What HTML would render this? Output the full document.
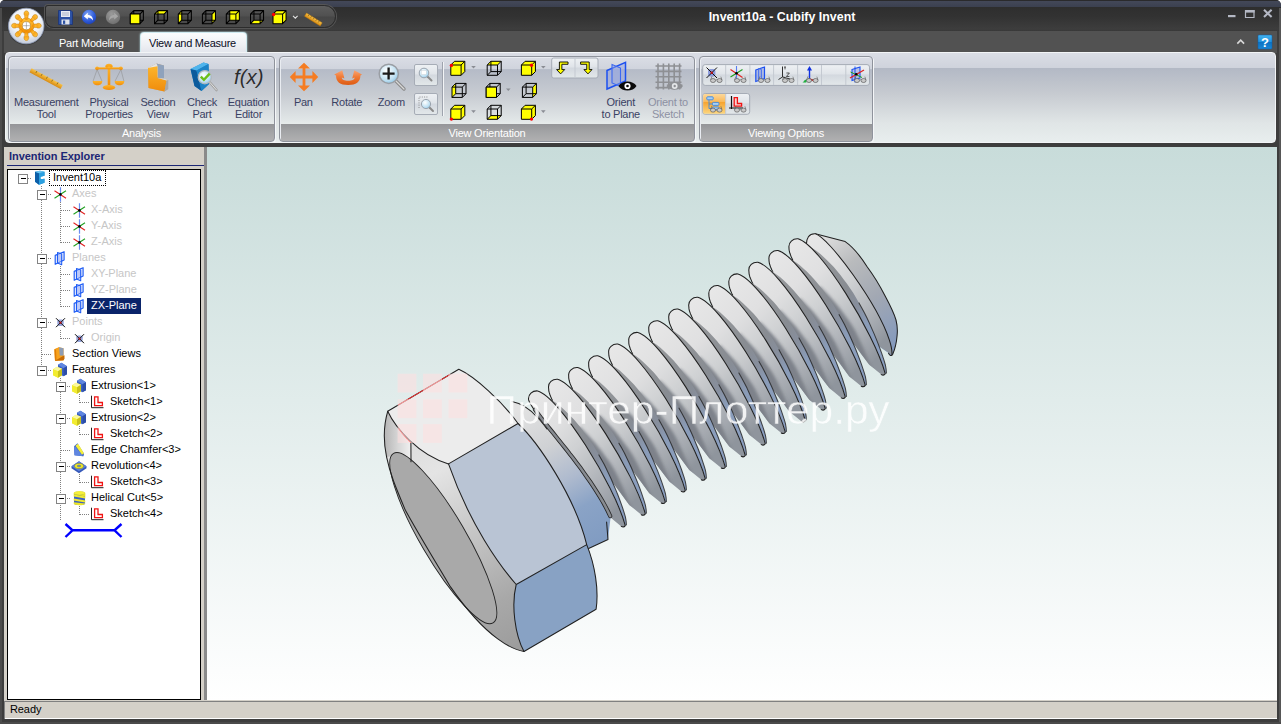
<!DOCTYPE html>
<html><head><meta charset="utf-8">
<style>
*{box-sizing:border-box;margin:0;padding:0}
html,body{width:1281px;height:724px;overflow:hidden;background:#fff;font-family:"Liberation Sans",sans-serif;}
.abs{position:absolute}
#win{position:absolute;left:0;top:0;width:1281px;height:724px;background:#3d3d3d;overflow:hidden;border-radius:5px 5px 0 0}
#topband{left:0;top:0;width:1281px;height:8px;background:linear-gradient(#2a2a2c 0,#2a2a2c 1px,#434859 1px,#3a3f4e 100%)}
#title{left:0;top:7px;width:1281px;height:24px;background:linear-gradient(#2e2e2e,#323232 40%,#3d3d3d 92%,#383838)}
#tabrow{left:4px;top:31px;width:1273px;height:22px;background:#525252}
#titletext{left:682px;top:10px;width:200px;text-align:center;color:#fff;font-weight:bold;font-size:12.4px;line-height:14px;white-space:nowrap}
#qat{left:45px;top:5px;width:291px;height:23px;border-radius:3px 12px 12px 9px;background:linear-gradient(#5e5e5e,#505050 48%,#474747 52%,#4b4b4b);border:1px solid #2c2c2c;box-shadow:0 0 0 1px #555}
.tab{font-size:11px;line-height:14px;white-space:nowrap;letter-spacing:-0.25px}
#ribbon{left:5px;top:52.4px;width:1271px;height:91.1px;border-radius:4px;border:1px solid #f2f4f6;
 background:linear-gradient(#dadde5 0,#cfd3dc 14.6px,#b3b9c5 15.4px,#c6cad0 40px,#e0e5e6 70px,#e8eeee 100%)}
.grp{position:absolute;top:56px;height:86px;border-radius:4px;border:1px solid #8f939c;box-shadow:1px 1px 0 #f4f6f8, inset 1px 1px 0 #e9ecf1;
 background:linear-gradient(#dadde5 0,#d0d4dd 11.8px,#b5bbc7 12.6px,#c8ccd2 38px,#e2e7e8 64px,#e6ebeb 66.5px,#959699 67.5px,#a3a4a6 75px,#b0b0b1 100%)}
.cap{position:absolute;left:0;right:0;bottom:1px;height:14px;text-align:center;color:#fff;font-size:11px;line-height:14px;white-space:nowrap;letter-spacing:-0.22px}
.lbl{position:absolute;text-align:center;color:#3a4163;font-size:11px;line-height:12.8px;white-space:nowrap;letter-spacing:-0.25px}
.lbl.dis{color:#8d91a3}
#left{left:4px;top:147px;width:200px;height:554px;background:#d4d0c8}
#split{left:204px;top:147px;width:3px;height:554px;background:#8a8a8a}
#tree{left:7px;top:169px;width:194px;height:531px;background:#fff;border:1px solid #000}
#view{left:207px;top:147px;width:1070px;height:554px;background:linear-gradient(#c8dcda,#ffffff)}
#status{left:4px;top:700px;width:1273px;height:19px;background:#d4d0c8;border-top:1px solid #d4d0c8;box-shadow:inset 1px 1px 0 #808080, inset 0 -1px 0 #fff}
.t{position:absolute;font-size:12px;line-height:16px;white-space:nowrap;color:#000;letter-spacing:-0.25px}
.t.g{color:#cbcbcb}
.tt{font-size:11px;line-height:14px;white-space:nowrap}
</style></head><body>
<div id="win">
<div id="topband" class="abs"></div>
<div id="title" class="abs"></div>
<div id="tabrow" class="abs"></div>
<div id="qat" class="abs"></div>
<div id="titletext" class="abs">Invent10a - Cubify Invent</div>

<!-- tabs -->
<div class="abs tab" style="left:59px;top:36px;color:#fff">Part Modeling</div>
<div class="abs" style="left:140px;top:32px;width:107px;height:22px;border-radius:4px 4px 0 0;background:linear-gradient(#fbfcfd,#eef0f4 55%,#e0e3ea);border:1px solid #cfeaf0;border-bottom:none;box-shadow:0 0 2px #bfe8f0"></div>
<div class="abs tab" style="left:149px;top:36.4px;color:#0a0c24">View and Measure</div>

<div id="ribbon" class="abs"></div>
<div class="grp" style="left:8px;width:267px"><div class="cap">Analysis</div></div>
<div class="grp" style="left:279px;width:416px"><div class="cap">View Orientation</div></div>
<div class="grp" style="left:699px;width:174px"><div class="cap">Viewing Options</div></div>

<div id="left" class="abs"></div>
<div id="split" class="abs"></div>
<div id="tree" class="abs"></div>
<div id="view" class="abs"></div>
<div id="status" class="abs"></div>
<div class="abs tt" style="left:10px;top:702px;color:#000;letter-spacing:-0.1px">Ready</div>
<div class="abs" style="left:0;top:8px;width:2px;height:716px;background:#4c4c4c"></div><div class="abs" style="left:1279px;top:8px;width:2px;height:716px;background:#565656"></div><div class="abs" style="left:0;top:722px;width:1281px;height:2px;background:#4a4a4a"></div>
<svg class="abs" style="left:0;top:0" width="1281" height="147" viewBox="0 0 1281 147">
<defs>
<radialGradient id="appg" cx=".5" cy=".35" r=".75"><stop offset="0" stop-color="#ffffff"/><stop offset=".55" stop-color="#eef1f6"/><stop offset=".85" stop-color="#c3cbdb"/><stop offset="1" stop-color="#8e9ab4"/></radialGradient>
<linearGradient id="gearg" x1="0" y1="0" x2="0" y2="1"><stop offset="0" stop-color="#ffc23a"/><stop offset="1" stop-color="#f08a00"/></linearGradient>
<radialGradient id="undog" cx=".4" cy=".3" r=".8"><stop offset="0" stop-color="#7fa4f4"/><stop offset=".6" stop-color="#2e5ad8"/><stop offset="1" stop-color="#1a3aa8"/></radialGradient>
<radialGradient id="redog" cx=".4" cy=".3" r=".8"><stop offset="0" stop-color="#9a9a9a"/><stop offset="1" stop-color="#6a6a6a"/></radialGradient>
<linearGradient id="helpg" x1="0" y1="0" x2="0" y2="1"><stop offset="0" stop-color="#45b4f0"/><stop offset=".5" stop-color="#1f8fdc"/><stop offset=".52" stop-color="#0a72c4"/><stop offset="1" stop-color="#1a86d4"/></linearGradient>
<linearGradient id="rulg" x1="0" y1="0" x2="0" y2="1"><stop offset="0" stop-color="#f7c24a"/><stop offset="1" stop-color="#d88a10"/></linearGradient>
<linearGradient id="org" x1="0" y1="0" x2="0" y2="1"><stop offset="0" stop-color="#fdb52a"/><stop offset="1" stop-color="#f08c0c"/></linearGradient>
<linearGradient id="pang" x1="0" y1="0" x2="0" y2="1"><stop offset="0" stop-color="#f98a38"/><stop offset="1" stop-color="#e8600c"/></linearGradient>
<radialGradient id="lens" cx=".4" cy=".35" r=".7"><stop offset="0" stop-color="#ffffff"/><stop offset=".7" stop-color="#bfe0f2"/><stop offset="1" stop-color="#8cc4e6"/></radialGradient>
<linearGradient id="blk" x1="0" y1="0" x2="1" y2="1"><stop offset="0" stop-color="#3aa6e6"/><stop offset="1" stop-color="#0a5fa4"/></linearGradient>
<linearGradient id="btng" x1="0" y1="0" x2="0" y2="1"><stop offset="0" stop-color="#eef1f4"/><stop offset=".45" stop-color="#e0e4e9"/><stop offset=".5" stop-color="#d3d8df"/><stop offset="1" stop-color="#e3e8ea"/></linearGradient>
<linearGradient id="hotg" x1="0" y1="0" x2="0" y2="1"><stop offset="0" stop-color="#fcd89a"/><stop offset=".4" stop-color="#f9b858"/><stop offset=".42" stop-color="#f6a430"/><stop offset="1" stop-color="#fbd680"/></linearGradient>
</defs>
<circle cx="26.2" cy="26.5" r="18.6" fill="#2c2c2c" opacity=".5"/>
<circle cx="26.2" cy="26" r="17.8" fill="url(#appg)" stroke="#8e9ab6" stroke-width=".8"/>
<g transform="translate(26.4,25.7) rotate(0)"><path d="M-1.5,-6.5 L-1.7,-10 C-2.9,-11.2 -2.7,-14.6 0,-14.9 C2.7,-14.6 2.9,-11.2 1.7,-10 L1.5,-6.5 Z" fill="url(#gearg)" stroke="#c07a10" stroke-width=".5"/></g>
<g transform="translate(26.4,25.7) rotate(45)"><path d="M-1.5,-6.5 L-1.7,-10 C-2.9,-11.2 -2.7,-14.6 0,-14.9 C2.7,-14.6 2.9,-11.2 1.7,-10 L1.5,-6.5 Z" fill="url(#gearg)" stroke="#c07a10" stroke-width=".5"/></g>
<g transform="translate(26.4,25.7) rotate(90)"><path d="M-1.5,-6.5 L-1.7,-10 C-2.9,-11.2 -2.7,-14.6 0,-14.9 C2.7,-14.6 2.9,-11.2 1.7,-10 L1.5,-6.5 Z" fill="url(#gearg)" stroke="#c07a10" stroke-width=".5"/></g>
<g transform="translate(26.4,25.7) rotate(135)"><path d="M-1.5,-6.5 L-1.7,-10 C-2.9,-11.2 -2.7,-14.6 0,-14.9 C2.7,-14.6 2.9,-11.2 1.7,-10 L1.5,-6.5 Z" fill="url(#gearg)" stroke="#c07a10" stroke-width=".5"/></g>
<g transform="translate(26.4,25.7) rotate(180)"><path d="M-1.5,-6.5 L-1.7,-10 C-2.9,-11.2 -2.7,-14.6 0,-14.9 C2.7,-14.6 2.9,-11.2 1.7,-10 L1.5,-6.5 Z" fill="url(#gearg)" stroke="#c07a10" stroke-width=".5"/></g>
<g transform="translate(26.4,25.7) rotate(225)"><path d="M-1.5,-6.5 L-1.7,-10 C-2.9,-11.2 -2.7,-14.6 0,-14.9 C2.7,-14.6 2.9,-11.2 1.7,-10 L1.5,-6.5 Z" fill="url(#gearg)" stroke="#c07a10" stroke-width=".5"/></g>
<g transform="translate(26.4,25.7) rotate(270)"><path d="M-1.5,-6.5 L-1.7,-10 C-2.9,-11.2 -2.7,-14.6 0,-14.9 C2.7,-14.6 2.9,-11.2 1.7,-10 L1.5,-6.5 Z" fill="url(#gearg)" stroke="#c07a10" stroke-width=".5"/></g>
<g transform="translate(26.4,25.7) rotate(315)"><path d="M-1.5,-6.5 L-1.7,-10 C-2.9,-11.2 -2.7,-14.6 0,-14.9 C2.7,-14.6 2.9,-11.2 1.7,-10 L1.5,-6.5 Z" fill="url(#gearg)" stroke="#c07a10" stroke-width=".5"/></g>
<circle cx="26.4" cy="25.7" r="7.6" fill="url(#gearg)" stroke="#c07a10" stroke-width=".5"/>
<g transform="translate(26.4,25.7) rotate(0)"><path d="M-1.2,-6 L-1.3,-10 L1.3,-10 L1.2,-6 Z" fill="url(#gearg)"/></g>
<g transform="translate(26.4,25.7) rotate(45)"><path d="M-1.2,-6 L-1.3,-10 L1.3,-10 L1.2,-6 Z" fill="url(#gearg)"/></g>
<g transform="translate(26.4,25.7) rotate(90)"><path d="M-1.2,-6 L-1.3,-10 L1.3,-10 L1.2,-6 Z" fill="url(#gearg)"/></g>
<g transform="translate(26.4,25.7) rotate(135)"><path d="M-1.2,-6 L-1.3,-10 L1.3,-10 L1.2,-6 Z" fill="url(#gearg)"/></g>
<g transform="translate(26.4,25.7) rotate(180)"><path d="M-1.2,-6 L-1.3,-10 L1.3,-10 L1.2,-6 Z" fill="url(#gearg)"/></g>
<g transform="translate(26.4,25.7) rotate(225)"><path d="M-1.2,-6 L-1.3,-10 L1.3,-10 L1.2,-6 Z" fill="url(#gearg)"/></g>
<g transform="translate(26.4,25.7) rotate(270)"><path d="M-1.2,-6 L-1.3,-10 L1.3,-10 L1.2,-6 Z" fill="url(#gearg)"/></g>
<g transform="translate(26.4,25.7) rotate(315)"><path d="M-1.2,-6 L-1.3,-10 L1.3,-10 L1.2,-6 Z" fill="url(#gearg)"/></g>
<circle cx="26.4" cy="25.7" r="4.1" fill="#fff" stroke="#b07818" stroke-width=".6"/>
<path d="M22.9,25.7 h7 M26.4,22.2 v7" stroke="#8a8a8a" stroke-width=".6"/>
<g transform="translate(58,10)"><path d="M0.5,0.5 H13 L14.5,2 V14.5 H0.5 Z" fill="#2d52a4" stroke="#1a3478" stroke-width=".8"/><rect x="3" y="1" width="9" height="6" fill="#e8ecf4"/><path d="M4,3 h7 M4,5 h7" stroke="#9aa4bc" stroke-width=".8"/><rect x="3.5" y="9.5" width="8" height="5" fill="#dfe3ec"/><rect x="5" y="10.5" width="2.2" height="3.4" fill="#2d52a4"/></g>
<circle cx="89" cy="17" r="7.2" fill="url(#undog)"/><path d="M93,20.5 C93,16.5 90.5,15 87.8,15 V12.8 L83.8,16.2 L87.8,19.6 V17.4 C90,17.4 91.8,18.2 93,20.5 Z" fill="#fff"/>
<circle cx="113" cy="17" r="7.2" fill="url(#redog)"/><path d="M109,20.5 C109,16.5 111.5,15 114.2,15 V12.8 L118.2,16.2 L114.2,19.6 V17.4 C112,17.4 110.2,18.2 109,20.5 Z" fill="#a6a6a6"/>
<g transform="translate(130.3,10.6)" stroke-linejoin="round"><path d="M0,3.456 H9.6 V13.056 H0 Z M3.456,0 H13.056 V9.6 H3.456 Z M0,3.456 L3.456,0 M9.6,3.456 L13.056,0 M9.6,13.056 L13.056,9.6 M0,13.056 L3.456,9.6" fill="none" stroke="#000" stroke-width="1.05"/><path d="M0,3.456 H9.6 V13.056 H0 Z" fill="#ffff00" stroke="#000" stroke-width="1.05"/></g>
<g transform="translate(154.5,10.6)" stroke-linejoin="round"><path d="M0,3.456 L3.456,0 L13.056,0 L9.6,3.456 Z" fill="#ffff00" stroke="none"/><path d="M0,3.456 H9.6 V13.056 H0 Z M3.456,0 H13.056 V9.6 H3.456 Z M0,3.456 L3.456,0 M9.6,3.456 L13.056,0 M9.6,13.056 L13.056,9.6 M0,13.056 L3.456,9.6" fill="none" stroke="#000" stroke-width="1.05"/></g>
<g transform="translate(178.3,10.6)" stroke-linejoin="round"><path d="M0,3.456 L3.456,0 L3.456,9.6 L0,13.056 Z" fill="#ffff00" stroke="none"/><path d="M0,3.456 H9.6 V13.056 H0 Z M3.456,0 H13.056 V9.6 H3.456 Z M0,3.456 L3.456,0 M9.6,3.456 L13.056,0 M9.6,13.056 L13.056,9.6 M0,13.056 L3.456,9.6" fill="none" stroke="#000" stroke-width="1.05"/></g>
<g transform="translate(202.4,10.6)" stroke-linejoin="round"><path d="M9.6,3.456 L13.056,0 L13.056,9.6 L9.6,13.056 Z" fill="#ffff00" stroke="none"/><path d="M0,3.456 H9.6 V13.056 H0 Z M3.456,0 H13.056 V9.6 H3.456 Z M0,3.456 L3.456,0 M9.6,3.456 L13.056,0 M9.6,13.056 L13.056,9.6 M0,13.056 L3.456,9.6" fill="none" stroke="#000" stroke-width="1.05"/></g>
<g transform="translate(226.3,10.6)" stroke-linejoin="round"><path d="M3.456,0 L13.056,0 L13.056,9.6 L3.456,9.6 Z" fill="#ffff00" stroke="none"/><path d="M0,3.456 H9.6 V13.056 H0 Z M3.456,0 H13.056 V9.6 H3.456 Z M0,3.456 L3.456,0 M9.6,3.456 L13.056,0 M9.6,13.056 L13.056,9.6 M0,13.056 L3.456,9.6" fill="none" stroke="#000" stroke-width="1.05"/></g>
<g transform="translate(250.5,10.6)" stroke-linejoin="round"><path d="M0,13.056 L3.456,9.6 L13.056,9.6 L9.6,13.056 Z" fill="#ffff00" stroke="none"/><path d="M0,3.456 H9.6 V13.056 H0 Z M3.456,0 H13.056 V9.6 H3.456 Z M0,3.456 L3.456,0 M9.6,3.456 L13.056,0 M9.6,13.056 L13.056,9.6 M0,13.056 L3.456,9.6" fill="none" stroke="#000" stroke-width="1.05"/></g>
<g transform="translate(273,10.6)" stroke-linejoin="round"><path d="M0,3.456 L3.456,0 L13.056,0 L13.056,9.6 L9.6,13.056 L0,13.056 Z" fill="#ffff00" stroke="none"/><path d="M0,3.456 H9.6 V13.056 H0 Z M0,3.456 L3.456,0 H13.056 L9.6,3.456 M13.056,0 V9.6 L9.6,13.056" fill="none" stroke="#000" stroke-width="1.05"/><circle cx="0.6" cy="3.856" r="1.7" fill="#ff0000" stroke="none"/></g>
<path d="M293,15.8 L295.3,18.2 L297.6,15.8" stroke="#e0e0e0" stroke-width="1.1" fill="none"/>
<g transform="translate(306.5,13) rotate(32)"><rect x="0" y="0" width="18.5" height="3.8" fill="url(#rulg)" stroke="#b8760a" stroke-width=".4"/><path d="M3,0 v1.8 M6,0 v1.8 M9,0 v1.8 M12,0 v1.8 M15,0 v1.8" stroke="#7a5a10" stroke-width=".6"/></g>
<rect x="1228" y="15" width="7.5" height="2.2" fill="#b4b8c4"/>
<path d="M1245.5,10.5 h8.5 v7 h-8.5 Z" fill="none" stroke="#b4b8c4" stroke-width="1.2"/><rect x="1245" y="10" width="9.6" height="2.6" fill="#b4b8c4"/>
<path d="M1264,9.8 L1271.6,17 M1271.6,9.8 L1264,17" stroke="#b4b8c4" stroke-width="2.1"/>
<path d="M1237.3,43.6 L1240.7,40.2 L1244.1,43.6" stroke="#d8d8d8" stroke-width="1.6" fill="none"/>
<rect x="1258" y="35" width="14" height="14" rx="1" fill="url(#helpg)" stroke="#0c5ea8" stroke-width=".5"/>
<text x="1265" y="46.6" text-anchor="middle" font-family="Liberation Sans, sans-serif" font-weight="bold" font-size="13" fill="#fff">?</text>
<g transform="translate(31.6,68.2) rotate(28.4)"><rect x="0" y="0" width="35.4" height="4.6" fill="url(#rulg)"/><path d="M6,0 v2.2 M12,0 v2.2 M18,0 v2.2 M24,0 v2.2 M30,0 v2.2" stroke="#8a6a18" stroke-width=".8"/></g>
<g transform="translate(92.5,63.5)" fill="url(#org)" stroke="none"><ellipse cx="16.5" cy="2.8" rx="3.6" ry="2.6"/><rect x="15.2" y="3" width="2.6" height="20"/><rect x="4" y="3.8" width="25" height="2"/><circle cx="4.6" cy="4.8" r="1.9"/><circle cx="28.4" cy="4.8" r="1.9"/><ellipse cx="16.5" cy="24" rx="6.2" ry="2.4"/><path d="M0.2,17.5 H9.8 C9.8,20.5 7.5,21.8 5,21.8 C2.5,21.8 0.2,20.5 0.2,17.5 Z"/><path d="M22.2,17.5 H31.8 C31.8,20.5 29.5,21.8 27,21.8 C24.5,21.8 22.2,20.5 22.2,17.5 Z"/><path d="M4.6,6 L0.6,17.5 M4.6,6 L9.4,17.5 M28.4,6 L22.6,17.5 M28.4,6 L31.4,17.5" stroke="#8a8a8a" stroke-width=".5" fill="none"/></g>
<g transform="translate(147.5,63)"><path d="M0.5,5 L9,0.5 L16.5,2.5 L16.5,15.5 L20.5,17 L20.5,26 L17,28.5 L1,25 Z" fill="#c8a878"/><path d="M9,0.5 L16.5,2.5 L16.5,15.5 L10,14.5 Z" fill="#8fa2bc"/><path d="M0.5,5 L9,0.5 L10,3 L10,14.5 Z" fill="#e4e4e4"/><path d="M0.5,5 L10,3.2 L10,15 L19,17.5 L17,28.5 L1,25 Z" fill="url(#org)"/><path d="M19,17.5 L20.8,17 L20.8,26 L17,28.5 Z" fill="#a8a8a8"/><path d="M10,15 L16.5,15.5 L20.5,17 L19,17.5 Z" fill="#d8d8d8"/></g>
<g transform="translate(189.5,62)"><path d="M1,7 L14,0.5 L19,2 L19.5,22 L12,29 L5,24 Z" fill="url(#blk)"/><path d="M1,7 L14,0.5 L19,2 L7,8.5 Z" fill="#4fb4ec"/><path d="M1,7 L7,8.5 L12,29 L5,24 Z" fill="#0c5a9c"/><path d="M7,8.5 L19,2 L19.5,22 L12,29 Z" fill="#1c84c8"/><path d="M20.5,20.5 L27,28" stroke="#a0a0a0" stroke-width="2.6" stroke-linecap="round"/><path d="M20.5,20.5 L27,28" stroke="#e0e0e0" stroke-width="1" stroke-linecap="round"/><circle cx="15.3" cy="15.2" r="6.6" fill="url(#lens)" stroke="#b4b8bc" stroke-width="1.3"/><path d="M11.3,14.6 L14.4,17.8 L20.2,11.6" stroke="#6cc018" stroke-width="2.4" fill="none"/></g>
<text x="234" y="84" font-family="Liberation Sans, sans-serif" font-style="italic" font-size="20.5" fill="#1c1c1c" fill-opacity=".92" textLength="29.5" lengthAdjust="spacingAndGlyphs">f(x)</text>
<g transform="translate(304,77)" fill="#f57c22"><path d="M0,-14.2 L6,-8.4 H1.4 V-1.4 H8.4 V-6 L14.2,0 L8.4,6 V1.4 H1.4 V8.4 H6 L0,14.2 L-6,8.4 H-1.4 V1.4 H-8.4 V6 L-14.2,0 L-8.4,-6 V-1.4 H-1.4 V-8.4 H-6 Z"/></g>
<linearGradient id="rotg" x1="0" y1="0" x2="0" y2="1"><stop offset="0" stop-color="#f9a473"/><stop offset=".45" stop-color="#f07a35"/><stop offset="1" stop-color="#dd5a12"/></linearGradient>
<path d="M342.3,70.3 L334.2,74.5 L336,75.5 C336,82 340,85 348.2,85 C356,85 360.4,82 360.4,75.5 L362,74.5 L354.3,70.3 L352.2,78.4 L354.6,77.6 C354.6,80 352,80.8 348.2,80.8 C344.4,80.8 341.8,80 341.8,77.6 L344.4,78.4 Z" fill="url(#rotg)"/>
<g transform="translate(378,63)"><path d="M17.5,17.5 L26,26" stroke="#8a8a8a" stroke-width="3.4" stroke-linecap="round"/><path d="M17.5,17.5 L26,26" stroke="#d8d8d8" stroke-width="1.2" stroke-linecap="round"/><circle cx="10.8" cy="10.8" r="9.6" fill="url(#lens)" stroke="#9a9ea4" stroke-width="1.5"/><path d="M4.6,10.6 H16.6 M10.6,4.6 V16.6" stroke="#1a1a1a" stroke-width="2.3"/></g>
<rect x="414.5" y="64.5" width="23" height="21" rx="1.5" fill="url(#btng)" stroke="#a6acb6" stroke-width="1"/>
<rect x="414.5" y="93.5" width="23" height="21" rx="1.5" fill="url(#btng)" stroke="#a6acb6" stroke-width="1"/>
<g transform="translate(418,67)"><path d="M9.5,9.5 L13.5,13.5" stroke="#8a8a8a" stroke-width="2" stroke-linecap="round"/><circle cx="6" cy="6" r="4.8" fill="url(#lens)" stroke="#9ca4ae" stroke-width="1"/><rect x="3.2" y="3.5" width="5" height="4" fill="#fff" stroke="#c0c8d0" stroke-width=".4"/></g>
<g transform="translate(418,96)"><path d="M1,12 V1 H10" stroke="#7a7a7a" stroke-width=".8" stroke-dasharray="1,1.3" fill="none"/><path d="M11.5,11.5 L15,15" stroke="#8a8a8a" stroke-width="2" stroke-linecap="round"/><circle cx="8" cy="8" r="4.6" fill="url(#lens)" stroke="#9ca4ae" stroke-width="1"/></g>
<path d="M442.5,62 V116" stroke="#9ea3ad" stroke-width="1"/><path d="M443.5,62 V116" stroke="#f2f4f6" stroke-width="1"/>
<g transform="translate(450.8,61.3)" stroke-linejoin="round"><path d="M0,3.708 L3.708,0 L14.008,0 L14.008,10.3 L10.3,14.008 L0,14.008 Z" fill="#ffff00" stroke="none"/><path d="M0,3.708 H10.3 V14.008 H0 Z M0,3.708 L3.708,0 H14.008 L10.3,3.708 M14.008,0 V10.3 L10.3,14.008" fill="none" stroke="#000" stroke-width="1"/><circle cx="0.6" cy="4.108" r="1.7" fill="#ff0000" stroke="none"/></g>
<path d="M471.2,66 h4.6 l-2.3,2.6 Z" fill="#8a8d94"/>
<g transform="translate(487.2,61.3)" stroke-linejoin="round"><path d="M0,3.708 L3.708,0 L14.008,0 L10.3,3.708 Z" fill="#ffff00" stroke="none"/><path d="M0,3.708 H10.3 V14.008 H0 Z M3.708,0 H14.008 V10.3 H3.708 Z M0,3.708 L3.708,0 M10.3,3.708 L14.008,0 M10.3,14.008 L14.008,10.3 M0,14.008 L3.708,10.3" fill="none" stroke="#000" stroke-width="1"/></g>
<g transform="translate(521.4,61.3)" stroke-linejoin="round"><path d="M0,3.708 L3.708,0 L14.008,0 L14.008,10.3 L10.3,14.008 L0,14.008 Z" fill="#ffff00" stroke="none"/><path d="M0,3.708 H10.3 V14.008 H0 Z M0,3.708 L3.708,0 H14.008 L10.3,3.708 M14.008,0 V10.3 L10.3,14.008" fill="none" stroke="#000" stroke-width="1"/><circle cx="10.1" cy="3.908" r="1.7" fill="#ff0000" stroke="none"/></g>
<path d="M541,66 h4.6 l-2.3,2.6 Z" fill="#8a8d94"/>
<g transform="translate(452,83.4)" stroke-linejoin="round"><path d="M0,3.708 L3.708,0 L3.708,10.3 L0,14.008 Z" fill="#ffff00" stroke="none"/><path d="M0,3.708 H10.3 V14.008 H0 Z M3.708,0 H14.008 V10.3 H3.708 Z M0,3.708 L3.708,0 M10.3,3.708 L14.008,0 M10.3,14.008 L14.008,10.3 M0,14.008 L3.708,10.3" fill="none" stroke="#000" stroke-width="1"/></g>
<g transform="translate(486.2,83.4)" stroke-linejoin="round"><path d="M0,3.708 H10.3 V14.008 H0 Z M3.708,0 H14.008 V10.3 H3.708 Z M0,3.708 L3.708,0 M10.3,3.708 L14.008,0 M10.3,14.008 L14.008,10.3 M0,14.008 L3.708,10.3" fill="none" stroke="#000" stroke-width="1"/><path d="M0,3.708 H10.3 V14.008 H0 Z" fill="#ffff00" stroke="#000" stroke-width="1"/></g>
<path d="M506,88.4 h4.6 l-2.3,2.6 Z" fill="#8a8d94"/>
<g transform="translate(522.4,83.4)" stroke-linejoin="round"><path d="M10.3,3.708 L14.008,0 L14.008,10.3 L10.3,14.008 Z" fill="#ffff00" stroke="none"/><path d="M0,3.708 H10.3 V14.008 H0 Z M3.708,0 H14.008 V10.3 H3.708 Z M0,3.708 L3.708,0 M10.3,3.708 L14.008,0 M10.3,14.008 L14.008,10.3 M0,14.008 L3.708,10.3" fill="none" stroke="#000" stroke-width="1"/></g>
<g transform="translate(450.8,105.3)" stroke-linejoin="round"><path d="M0,3.708 L3.708,0 L14.008,0 L14.008,10.3 L10.3,14.008 L0,14.008 Z" fill="#ffff00" stroke="none"/><path d="M0,3.708 H10.3 V14.008 H0 Z M0,3.708 L3.708,0 H14.008 L10.3,3.708 M14.008,0 V10.3 L10.3,14.008" fill="none" stroke="#000" stroke-width="1"/><circle cx="0.6" cy="13.808" r="1.7" fill="#ff0000" stroke="none"/></g>
<path d="M471.2,110.3 h4.6 l-2.3,2.6 Z" fill="#8a8d94"/>
<g transform="translate(487.2,105.3)" stroke-linejoin="round"><path d="M0,14.008 L3.708,10.3 L14.008,10.3 L10.3,14.008 Z" fill="#ffff00" stroke="none"/><path d="M0,3.708 H10.3 V14.008 H0 Z M3.708,0 H14.008 V10.3 H3.708 Z M0,3.708 L3.708,0 M10.3,3.708 L14.008,0 M10.3,14.008 L14.008,10.3 M0,14.008 L3.708,10.3" fill="none" stroke="#000" stroke-width="1"/></g>
<g transform="translate(521.4,105.3)" stroke-linejoin="round"><path d="M0,3.708 L3.708,0 L14.008,0 L14.008,10.3 L10.3,14.008 L0,14.008 Z" fill="#ffff00" stroke="none"/><path d="M0,3.708 H10.3 V14.008 H0 Z M0,3.708 L3.708,0 H14.008 L10.3,3.708 M14.008,0 V10.3 L10.3,14.008" fill="none" stroke="#000" stroke-width="1"/><circle cx="10.1" cy="13.808" r="1.7" fill="#ff0000" stroke="none"/></g>
<path d="M541,110.3 h4.6 l-2.3,2.6 Z" fill="#8a8d94"/>
<rect x="551.7" y="58" width="46.3" height="20" rx="2" fill="url(#btng)" stroke="#a6acb6" stroke-width="1"/><path d="M575,58.5 V77.5" stroke="#c4c9d1"/>
<path d="M568,62.5 H561 V68.5 H564.2 L559.6,73.4 L555,68.5 H558.2 V59.9 H568 Z" transform="translate(562.3,67.9) scale(.88) translate(-561.5,-66.6)" fill="#ffff00" stroke="#000" stroke-width="1"/>
<path d="M580,62.5 H587 V68.5 H583.8 L588.4,73.4 L593,68.5 H589.8 V59.9 H580 Z" transform="translate(586.3,67.9) scale(.88) translate(-586.5,-66.6)" fill="#ffff00" stroke="#000" stroke-width="1"/>
<g transform="translate(606,61.5)"><path d="M1,9 L19.5,0.8 L19.5,19.5 L1,27.5 Z" fill="#9aa8e0" fill-opacity=".55" stroke="#1c50f0" stroke-width="1.5"/><path d="M6,3 L14.5,6.5 L14.5,25 L6,21.5 Z" fill="#9aa8e0" fill-opacity=".45" stroke="#3c68f0" stroke-width="1.1"/><path d="M12.5,24.5 C16,18.5 27,18.5 30.5,24.5 C27,30.5 16,30.5 12.5,24.5 Z" fill="#0a0a0a"/><circle cx="21.5" cy="24.5" r="3.1" fill="#fff"/><circle cx="21.5" cy="24.5" r="1.3" fill="#0a0a0a"/></g>
<g transform="translate(655.5,63.5)" stroke="#8e9094" stroke-width="1.6" fill="none"><path d="M2.5,0 V26 M0,2.5 H26"/><path d="M7.9,0 V26 M0,7.9 H26"/><path d="M13.3,0 V26 M0,13.3 H26"/><path d="M18.7,0 V26 M0,18.7 H26"/><path d="M24.1,0 V26 M0,24.1 H26"/><path d="M11,22.5 C14,17.5 24,17.5 27.5,22.5 C24,27.5 14,27.5 11,22.5 Z" fill="#8e9094" stroke="none"/><circle cx="19.2" cy="22.5" r="2.9" fill="#e4e6e8" stroke="none"/><circle cx="19.2" cy="22.5" r="1.2" fill="#8e9094" stroke="none"/></g>
<rect x="702.7" y="64.6" width="166.8" height="20.8" rx="2.5" fill="url(#btng)" stroke="#a6acb6" stroke-width="1"/>
<path d="M725.7,65 V85" stroke="#c4c9d1" stroke-width="1"/>
<path d="M749.9,65 V85" stroke="#c4c9d1" stroke-width="1"/>
<path d="M773.6,65 V85" stroke="#c4c9d1" stroke-width="1"/>
<path d="M797.6,65 V85" stroke="#c4c9d1" stroke-width="1"/>
<path d="M821.5,65 V85" stroke="#c4c9d1" stroke-width="1"/>
<path d="M845.8,65 V85" stroke="#c4c9d1" stroke-width="1"/>
<rect x="702.7" y="93.5" width="47" height="20.8" rx="2.5" fill="url(#btng)" stroke="#a6acb6" stroke-width="1"/>
<path d="M704.7,94 H725.5 V113.8 H704.7 Q703.2,113.8 703.2,112.3 V95.5 Q703.2,94 704.7,94 Z" fill="url(#hotg)"/><path d="M725.7,94 V114" stroke="#c4c9d1" stroke-width="1"/>
<g transform="translate(706,67)"><rect x="2" y="2" width="7.4" height="7.4" rx="2" fill="#8c9cdc"/><path d="M0.5,0.5 L11,11 M11,0.5 L0.5,11" stroke="#101010" stroke-width="1"/><circle cx="5.7" cy="5.7" r="1.2" fill="#c01010"/></g><g transform="translate(710.3,78) scale(.84)"><ellipse cx="3.2" cy="3" rx="3" ry="2.4" fill="#c8c8c8" stroke="#5a5a5a" stroke-width=".8"/><ellipse cx="11" cy="3" rx="3" ry="2.4" fill="#c8c8c8" stroke="#5a5a5a" stroke-width=".8"/><path d="M6.2,2.4 Q7.1,1.4 8,2.4 M0.4,2 L2,-2 M13.8,2 L12.6,-1.6" stroke="#5a5a5a" stroke-width=".7" fill="none"/></g>
<g transform="translate(730,66)"><path d="M6.5,0 V14" stroke="#5a7cf0" stroke-width="1.1"/><path d="M0.5,3.5 L12.5,11.5" stroke="#e02020" stroke-width="1.1"/><path d="M0.5,11 L12.5,3.5" stroke="#20a020" stroke-width="1.1"/><circle cx="6.5" cy="7.3" r="1.3" fill="#000"/></g><g transform="translate(734.3,78) scale(.84)"><ellipse cx="3.2" cy="3" rx="3" ry="2.4" fill="#c8c8c8" stroke="#5a5a5a" stroke-width=".8"/><ellipse cx="11" cy="3" rx="3" ry="2.4" fill="#c8c8c8" stroke="#5a5a5a" stroke-width=".8"/><path d="M6.2,2.4 Q7.1,1.4 8,2.4 M0.4,2 L2,-2 M13.8,2 L12.6,-1.6" stroke="#5a5a5a" stroke-width=".7" fill="none"/></g>
<g transform="translate(755,66)"><path d="M0.8,4 L9.5,1 L9.5,12.5 L0.8,15.5 Z" fill="#8c9cdc" fill-opacity=".6" stroke="#1c50f0" stroke-width="1.2"/><path d="M3.5,2.5 L6.5,3.6 L6.5,14 L3.5,13 Z" fill="#8c9cdc" fill-opacity=".5" stroke="#3c68f0" stroke-width=".8"/></g><g transform="translate(758.3,78) scale(.84)"><ellipse cx="3.2" cy="3" rx="3" ry="2.4" fill="#c8c8c8" stroke="#5a5a5a" stroke-width=".8"/><ellipse cx="11" cy="3" rx="3" ry="2.4" fill="#c8c8c8" stroke="#5a5a5a" stroke-width=".8"/><path d="M6.2,2.4 Q7.1,1.4 8,2.4 M0.4,2 L2,-2 M13.8,2 L12.6,-1.6" stroke="#5a5a5a" stroke-width=".7" fill="none"/></g>
<g transform="translate(778,66)" stroke="#303030" stroke-width="1" fill="none"><path d="M4.5,0.5 V11 M0.5,13.5 L4.5,11 L12,13"/><path d="M6,1 L8,1 M7,1 V3.4 M8.4,7 H11.4 L8.4,10.5 H11.4" stroke-width=".8"/></g><g transform="translate(782.3,78) scale(.84)"><ellipse cx="3.2" cy="3" rx="3" ry="2.4" fill="#c8c8c8" stroke="#5a5a5a" stroke-width=".8"/><ellipse cx="11" cy="3" rx="3" ry="2.4" fill="#c8c8c8" stroke="#5a5a5a" stroke-width=".8"/><path d="M6.2,2.4 Q7.1,1.4 8,2.4 M0.4,2 L2,-2 M13.8,2 L12.6,-1.6" stroke="#5a5a5a" stroke-width=".7" fill="none"/></g>
<g transform="translate(802,66)"><path d="M7.5,13 V3" stroke="#1030e0" stroke-width="1.4"/><path d="M7.5,0 L10,4.4 H5 Z" fill="#1030e0"/><path d="M7.5,13 L13,15" stroke="#e02020" stroke-width="1.6"/><path d="M7.5,13 L2.5,15.5" stroke="#20b040" stroke-width="1.6"/><path d="M0.5,16.5 L3.8,13.4 L4.4,16.5 Z" fill="#20b040"/></g><g transform="translate(806.3,78) scale(.84)"><ellipse cx="3.2" cy="3" rx="3" ry="2.4" fill="#c8c8c8" stroke="#5a5a5a" stroke-width=".8"/><ellipse cx="11" cy="3" rx="3" ry="2.4" fill="#c8c8c8" stroke="#5a5a5a" stroke-width=".8"/><path d="M6.2,2.4 Q7.1,1.4 8,2.4 M0.4,2 L2,-2 M13.8,2 L12.6,-1.6" stroke="#5a5a5a" stroke-width=".7" fill="none"/></g>
<g transform="translate(850,65.5)"><path d="M2,4 L10,1.5 L10,12.5 L2,15 Z" fill="#8c9cdc" fill-opacity=".5" stroke="#1c50f0" stroke-width="1.1"/><path d="M5,1 V17" stroke="#1c50f0" stroke-width="1"/><path d="M0,12.5 L14,4.5" stroke="#e02020" stroke-width="1.2"/><path d="M0.5,6.5 L12,12" stroke="#20a020" stroke-width="1"/><circle cx="6.2" cy="8.8" r="1.3" fill="#000"/></g><g transform="translate(854.3,78) scale(.84)"><ellipse cx="3.2" cy="3" rx="3" ry="2.4" fill="#c8c8c8" stroke="#5a5a5a" stroke-width=".8"/><ellipse cx="11" cy="3" rx="3" ry="2.4" fill="#c8c8c8" stroke="#5a5a5a" stroke-width=".8"/><path d="M6.2,2.4 Q7.1,1.4 8,2.4 M0.4,2 L2,-2 M13.8,2 L12.6,-1.6" stroke="#5a5a5a" stroke-width=".7" fill="none"/></g>
<g transform="translate(706,96)" fill="#a8d0f4" stroke="#3c88e0" stroke-width=".9"><path d="M3,4 V12.5 H6.5 M3,8 H6.5" fill="none"/><rect x="0.8" y="0.8" width="6.4" height="3" rx=".8"/><rect x="6.5" y="6.4" width="6.4" height="3" rx=".8"/><rect x="6.5" y="11" width="6.4" height="3" rx=".8"/></g><g transform="translate(710.3,107.6) scale(.84)"><ellipse cx="3.2" cy="3" rx="3" ry="2.4" fill="#c8c8c8" stroke="#5a5a5a" stroke-width=".8"/><ellipse cx="11" cy="3" rx="3" ry="2.4" fill="#c8c8c8" stroke="#5a5a5a" stroke-width=".8"/><path d="M6.2,2.4 Q7.1,1.4 8,2.4 M0.4,2 L2,-2 M13.8,2 L12.6,-1.6" stroke="#5a5a5a" stroke-width=".7" fill="none"/></g>
<g transform="translate(729,95.5)"><path d="M2.5,0.5 V13.5 M0,12.5 H14" stroke="#101010" stroke-width="1.2" fill="none"/><path d="M5.2,2.2 H8.4 V8 H12.6 V10.6 H5.2 Z" fill="#f8d0d0" stroke="#f01414" stroke-width="1.3"/></g><g transform="translate(734.3,107.6) scale(.84)"><ellipse cx="3.2" cy="3" rx="3" ry="2.4" fill="#c8c8c8" stroke="#5a5a5a" stroke-width=".8"/><ellipse cx="11" cy="3" rx="3" ry="2.4" fill="#c8c8c8" stroke="#5a5a5a" stroke-width=".8"/><path d="M6.2,2.4 Q7.1,1.4 8,2.4 M0.4,2 L2,-2 M13.8,2 L12.6,-1.6" stroke="#5a5a5a" stroke-width=".7" fill="none"/></g>
</svg>
<div class="lbl" style="left:1.3px;top:95.5px;width:90px">Measurement<br>Tool</div>
<div class="lbl" style="left:64px;top:95.5px;width:90px">Physical<br>Properties</div>
<div class="lbl" style="left:113px;top:95.5px;width:90px">Section<br>View</div>
<div class="lbl" style="left:157px;top:95.5px;width:90px">Check<br>Part</div>
<div class="lbl" style="left:203.5px;top:95.5px;width:90px">Equation<br>Editor</div>
<div class="lbl" style="left:258.3px;top:95.5px;width:90px">Pan</div>
<div class="lbl" style="left:301.8px;top:95.5px;width:90px">Rotate</div>
<div class="lbl" style="left:346.3px;top:95.5px;width:90px">Zoom</div>
<div class="lbl" style="left:575.8px;top:95.5px;width:90px">Orient<br>to Plane</div>
<div class="lbl dis" style="left:623px;top:95.5px;width:90px">Orient to<br>Sketch</div>
<svg class="abs" style="left:0;top:0" width="210" height="724" viewBox="0 0 210 724" shape-rendering="auto">
<path d="M41.5,186 V371" stroke="#808080" stroke-width="1" stroke-dasharray="1,1" fill="none" shape-rendering="crispEdges"/>
<path d="M60.5,202 V243" stroke="#808080" stroke-width="1" stroke-dasharray="1,1" fill="none" shape-rendering="crispEdges"/>
<path d="M60.5,266 V307" stroke="#808080" stroke-width="1" stroke-dasharray="1,1" fill="none" shape-rendering="crispEdges"/>
<path d="M60.5,330 V339" stroke="#808080" stroke-width="1" stroke-dasharray="1,1" fill="none" shape-rendering="crispEdges"/>
<path d="M60.5,378 V499" stroke="#808080" stroke-width="1" stroke-dasharray="1,1" fill="none" shape-rendering="crispEdges"/>
<path d="M79.5,394 V403" stroke="#808080" stroke-width="1" stroke-dasharray="1,1" fill="none" shape-rendering="crispEdges"/>
<path d="M79.5,426 V435" stroke="#808080" stroke-width="1" stroke-dasharray="1,1" fill="none" shape-rendering="crispEdges"/>
<path d="M79.5,474 V483" stroke="#808080" stroke-width="1" stroke-dasharray="1,1" fill="none" shape-rendering="crispEdges"/>
<path d="M79.5,506 V515" stroke="#808080" stroke-width="1" stroke-dasharray="1,1" fill="none" shape-rendering="crispEdges"/>
<path d="M60.5,497 V521" stroke="#808080" stroke-width="1" stroke-dasharray="1,1" fill="none" shape-rendering="crispEdges"/>
<path d="M28,178.5 H32" stroke="#808080" stroke-width="1" stroke-dasharray="1,1" fill="none" shape-rendering="crispEdges"/>
<path d="M42,194.5 H52" stroke="#808080" stroke-width="1" stroke-dasharray="1,1" fill="none" shape-rendering="crispEdges"/>
<path d="M61,210.5 H70" stroke="#808080" stroke-width="1" stroke-dasharray="1,1" fill="none" shape-rendering="crispEdges"/>
<path d="M61,226.5 H70" stroke="#808080" stroke-width="1" stroke-dasharray="1,1" fill="none" shape-rendering="crispEdges"/>
<path d="M61,242.5 H70" stroke="#808080" stroke-width="1" stroke-dasharray="1,1" fill="none" shape-rendering="crispEdges"/>
<path d="M42,258.5 H52" stroke="#808080" stroke-width="1" stroke-dasharray="1,1" fill="none" shape-rendering="crispEdges"/>
<path d="M61,274.5 H70" stroke="#808080" stroke-width="1" stroke-dasharray="1,1" fill="none" shape-rendering="crispEdges"/>
<path d="M61,290.5 H70" stroke="#808080" stroke-width="1" stroke-dasharray="1,1" fill="none" shape-rendering="crispEdges"/>
<path d="M61,306.5 H70" stroke="#808080" stroke-width="1" stroke-dasharray="1,1" fill="none" shape-rendering="crispEdges"/>
<path d="M42,322.5 H52" stroke="#808080" stroke-width="1" stroke-dasharray="1,1" fill="none" shape-rendering="crispEdges"/>
<path d="M61,338.5 H70" stroke="#808080" stroke-width="1" stroke-dasharray="1,1" fill="none" shape-rendering="crispEdges"/>
<path d="M42,354.5 H51" stroke="#808080" stroke-width="1" stroke-dasharray="1,1" fill="none" shape-rendering="crispEdges"/>
<path d="M42,370.5 H52" stroke="#808080" stroke-width="1" stroke-dasharray="1,1" fill="none" shape-rendering="crispEdges"/>
<path d="M61,386.5 H71" stroke="#808080" stroke-width="1" stroke-dasharray="1,1" fill="none" shape-rendering="crispEdges"/>
<path d="M80,402.5 H89" stroke="#808080" stroke-width="1" stroke-dasharray="1,1" fill="none" shape-rendering="crispEdges"/>
<path d="M61,418.5 H71" stroke="#808080" stroke-width="1" stroke-dasharray="1,1" fill="none" shape-rendering="crispEdges"/>
<path d="M80,434.5 H89" stroke="#808080" stroke-width="1" stroke-dasharray="1,1" fill="none" shape-rendering="crispEdges"/>
<path d="M61,450.5 H70" stroke="#808080" stroke-width="1" stroke-dasharray="1,1" fill="none" shape-rendering="crispEdges"/>
<path d="M61,466.5 H71" stroke="#808080" stroke-width="1" stroke-dasharray="1,1" fill="none" shape-rendering="crispEdges"/>
<path d="M80,482.5 H89" stroke="#808080" stroke-width="1" stroke-dasharray="1,1" fill="none" shape-rendering="crispEdges"/>
<path d="M61,498.5 H71" stroke="#808080" stroke-width="1" stroke-dasharray="1,1" fill="none" shape-rendering="crispEdges"/>
<path d="M80,514.5 H89" stroke="#808080" stroke-width="1" stroke-dasharray="1,1" fill="none" shape-rendering="crispEdges"/>
<rect x="18" y="174" width="9" height="9" fill="#fff" stroke="#848484" stroke-width="1" transform="translate(.5,.5)" shape-rendering="crispEdges"/>
<path d="M20.5,178.5 h5" stroke="#000" stroke-width="1" shape-rendering="crispEdges"/>
<g transform="translate(32,170.2)"><path d="M3,1.5 L8,0.5 L12.5,1.5 L12.5,5.5 L8.5,6.5 L8.5,9 L12.5,8.5 L12.5,12.5 L7,14.5 L3,11.5 Z" fill="#1e8fd0"/><path d="M3,1.5 L7,3 L7,14.5 L3,11.5 Z" fill="#0d5fa8"/><path d="M7,3 L12.5,1.5 L12.5,5.5 L8.5,6.5 L8.5,9 L12.5,8.5 L12.5,12.5 L7,14.5 Z" fill="#2ba0e0"/><path d="M3,1.5 L8,0.5 L12.5,1.5 L7,3 Z" fill="#6cc4f0"/></g>
<rect x="37" y="190" width="9" height="9" fill="#fff" stroke="#848484" stroke-width="1" transform="translate(.5,.5)" shape-rendering="crispEdges"/>
<path d="M39.5,194.5 h5" stroke="#000" stroke-width="1" shape-rendering="crispEdges"/>
<g transform="translate(52,186.2)"><path d="M8.5,1 V15.5" stroke="#6a8cf0" stroke-width="1.2"/><path d="M2.5,4.5 L14,12" stroke="#e02020" stroke-width="1.1"/><path d="M2.5,12 L14,4.5" stroke="#20a020" stroke-width="1.1"/><circle cx="8.4" cy="8.2" r="1.3" fill="#000"/></g>
<g transform="translate(71,202.2)"><path d="M8.5,1 V15.5" stroke="#6a8cf0" stroke-width="1.2"/><path d="M2.5,4.5 L14,12" stroke="#e02020" stroke-width="1.1"/><path d="M2.5,12 L14,4.5" stroke="#20a020" stroke-width="1.1"/><circle cx="8.4" cy="8.2" r="1.3" fill="#000"/></g>
<g transform="translate(71,218.2)"><path d="M8.5,1 V15.5" stroke="#6a8cf0" stroke-width="1.2"/><path d="M2.5,4.5 L14,12" stroke="#e02020" stroke-width="1.1"/><path d="M2.5,12 L14,4.5" stroke="#20a020" stroke-width="1.1"/><circle cx="8.4" cy="8.2" r="1.3" fill="#000"/></g>
<g transform="translate(71,234.2)"><path d="M8.5,1 V15.5" stroke="#6a8cf0" stroke-width="1.2"/><path d="M2.5,4.5 L14,12" stroke="#e02020" stroke-width="1.1"/><path d="M2.5,12 L14,4.5" stroke="#20a020" stroke-width="1.1"/><circle cx="8.4" cy="8.2" r="1.3" fill="#000"/></g>
<rect x="37" y="254" width="9" height="9" fill="#fff" stroke="#848484" stroke-width="1" transform="translate(.5,.5)" shape-rendering="crispEdges"/>
<path d="M39.5,258.5 h5" stroke="#000" stroke-width="1" shape-rendering="crispEdges"/>
<g transform="translate(52,250.2)"><g transform="translate(1.2,0)"><ellipse cx="6.5" cy="8" rx="2.6" ry="3.6" fill="#c4cef6"/><path d="M2,5.2 L10.9,1.5 L10.9,9.9 L2,14.1 Z" fill="#b8c6f8" fill-opacity=".35" stroke="#1e5cf5" stroke-width="1.15" stroke-linejoin="round"/><path d="M4.3,2.4 L8.5,3.8 L8.5,14.6 L4.3,12.7 Z" fill="#b8c6f8" fill-opacity=".35" stroke="#1e5cf5" stroke-width="1.05" stroke-linejoin="round"/></g></g>
<g transform="translate(71,266.2)"><g transform="translate(1.2,0)"><ellipse cx="6.5" cy="8" rx="2.6" ry="3.6" fill="#c4cef6"/><path d="M2,5.2 L10.9,1.5 L10.9,9.9 L2,14.1 Z" fill="#b8c6f8" fill-opacity=".35" stroke="#1e5cf5" stroke-width="1.15" stroke-linejoin="round"/><path d="M4.3,2.4 L8.5,3.8 L8.5,14.6 L4.3,12.7 Z" fill="#b8c6f8" fill-opacity=".35" stroke="#1e5cf5" stroke-width="1.05" stroke-linejoin="round"/></g></g>
<g transform="translate(71,282.2)"><g transform="translate(1.2,0)"><ellipse cx="6.5" cy="8" rx="2.6" ry="3.6" fill="#c4cef6"/><path d="M2,5.2 L10.9,1.5 L10.9,9.9 L2,14.1 Z" fill="#b8c6f8" fill-opacity=".35" stroke="#1e5cf5" stroke-width="1.15" stroke-linejoin="round"/><path d="M4.3,2.4 L8.5,3.8 L8.5,14.6 L4.3,12.7 Z" fill="#b8c6f8" fill-opacity=".35" stroke="#1e5cf5" stroke-width="1.05" stroke-linejoin="round"/></g></g>
<g transform="translate(71,298.2)"><g transform="translate(1.2,0)"><ellipse cx="6.5" cy="8" rx="2.6" ry="3.6" fill="#c4cef6"/><path d="M2,5.2 L10.9,1.5 L10.9,9.9 L2,14.1 Z" fill="#b8c6f8" fill-opacity=".35" stroke="#1e5cf5" stroke-width="1.15" stroke-linejoin="round"/><path d="M4.3,2.4 L8.5,3.8 L8.5,14.6 L4.3,12.7 Z" fill="#b8c6f8" fill-opacity=".35" stroke="#1e5cf5" stroke-width="1.05" stroke-linejoin="round"/></g></g>
<rect x="37" y="318" width="9" height="9" fill="#fff" stroke="#848484" stroke-width="1" transform="translate(.5,.5)" shape-rendering="crispEdges"/>
<path d="M39.5,322.5 h5" stroke="#000" stroke-width="1" shape-rendering="crispEdges"/>
<g transform="translate(52,314.2)"><rect x="5.3" y="5.3" width="6.4" height="6.4" rx="1.8" fill="#98a6dc"/><path d="M4,4 L13,13 M13,4 L4,13" stroke="#101010" stroke-width="1"/><circle cx="8.5" cy="8.5" r="1.1" fill="#b01010"/></g>
<g transform="translate(71,330.2)"><rect x="5.3" y="5.3" width="6.4" height="6.4" rx="1.8" fill="#98a6dc"/><path d="M4,4 L13,13 M13,4 L4,13" stroke="#101010" stroke-width="1"/><circle cx="8.5" cy="8.5" r="1.1" fill="#b01010"/></g>
<g transform="translate(52,346.2)"><path d="M2.5,3 L7,1 L11.5,2 L11.5,14 L3,14.5 Z" fill="#f59a14"/><path d="M7,1 L11.5,2 L11.5,9.5 L7.5,9.5 Z" fill="#8d9cb4"/><path d="M2.5,3 L7,1 L7.5,9.5 L11.5,9.5 L11.5,14 L3,14.5 Z" fill="#f7a21e"/><path d="M2.5,3 L4,3.2 L4.5,14.4 L3,14.5 Z" fill="#e07e08"/><path d="M3,14.5 L11.5,14 L12.5,12.5 L12.5,9 L11.5,9.5" fill="#c86c05"/></g>
<rect x="37" y="366" width="9" height="9" fill="#fff" stroke="#848484" stroke-width="1" transform="translate(.5,.5)" shape-rendering="crispEdges"/>
<path d="M39.5,370.5 h5" stroke="#000" stroke-width="1" shape-rendering="crispEdges"/>
<g transform="translate(52,362.2)"><path d="M6,2.5 L9.5,0.5 L15,4 L15,12 L11,14 L6,10 Z" fill="#3c62c4"/><path d="M6,2.5 L9.5,0.5 L15,4 L11.5,6 Z" fill="#5f86e0"/><path d="M11.5,6 L15,4 L15,12 L11.5,14 Z" fill="#2c4ea8"/><path d="M1,7 L5,4.5 L10,6.5 L10,13 L6,15.5 L1,13 Z" fill="#f5ef3a"/><path d="M1,7 L5,4.5 L10,6.5 L6,9 Z" fill="#fbf8a0"/><path d="M6,9 L10,6.5 L10,13 L6,15.5 Z" fill="#c9c21c"/><path d="M1,7 L6,9 L6,15.5 L1,13 Z" fill="#f2ec30"/></g>
<rect x="56" y="382" width="9" height="9" fill="#fff" stroke="#848484" stroke-width="1" transform="translate(.5,.5)" shape-rendering="crispEdges"/>
<path d="M58.5,386.5 h5" stroke="#000" stroke-width="1" shape-rendering="crispEdges"/>
<g transform="translate(71,378.2)"><path d="M6,2.5 L9.5,0.5 L15,4 L15,12 L11,14 L6,10 Z" fill="#3c62c4"/><path d="M6,2.5 L9.5,0.5 L15,4 L11.5,6 Z" fill="#5f86e0"/><path d="M11.5,6 L15,4 L15,12 L11.5,14 Z" fill="#2c4ea8"/><path d="M1,7 L5,4.5 L10,6.5 L10,13 L6,15.5 L1,13 Z" fill="#f5ef3a"/><path d="M1,7 L5,4.5 L10,6.5 L6,9 Z" fill="#fbf8a0"/><path d="M6,9 L10,6.5 L10,13 L6,15.5 Z" fill="#c9c21c"/><path d="M1,7 L6,9 L6,15.5 L1,13 Z" fill="#f2ec30"/></g>
<g transform="translate(90,394.2)"><path d="M1.5,1.5 V13.5 H13.5" stroke="#202020" stroke-width="1" fill="none"/><path d="M4.6,2.6 H8 V8.3 H12.4 V11.4 H4.6 Z" fill="#fff" stroke="#f01414" stroke-width="1.3"/></g>
<rect x="56" y="414" width="9" height="9" fill="#fff" stroke="#848484" stroke-width="1" transform="translate(.5,.5)" shape-rendering="crispEdges"/>
<path d="M58.5,418.5 h5" stroke="#000" stroke-width="1" shape-rendering="crispEdges"/>
<g transform="translate(71,410.2)"><path d="M6,2.5 L9.5,0.5 L15,4 L15,12 L11,14 L6,10 Z" fill="#3c62c4"/><path d="M6,2.5 L9.5,0.5 L15,4 L11.5,6 Z" fill="#5f86e0"/><path d="M11.5,6 L15,4 L15,12 L11.5,14 Z" fill="#2c4ea8"/><path d="M1,7 L5,4.5 L10,6.5 L10,13 L6,15.5 L1,13 Z" fill="#f5ef3a"/><path d="M1,7 L5,4.5 L10,6.5 L6,9 Z" fill="#fbf8a0"/><path d="M6,9 L10,6.5 L10,13 L6,15.5 Z" fill="#c9c21c"/><path d="M1,7 L6,9 L6,15.5 L1,13 Z" fill="#f2ec30"/></g>
<g transform="translate(90,426.2)"><path d="M1.5,1.5 V13.5 H13.5" stroke="#202020" stroke-width="1" fill="none"/><path d="M4.6,2.6 H8 V8.3 H12.4 V11.4 H4.6 Z" fill="#fff" stroke="#f01414" stroke-width="1.3"/></g>
<g transform="translate(71,442.2)"><path d="M3,4 L6.5,1 L13,11.5 L12.5,14 L3.5,13 Z" fill="#3c62c4"/><path d="M3,4 L4,4 L12,14 L3.5,13 Z" fill="#5f86e0"/><path d="M4.5,3.5 L7,1.5 L13,11 L11,12.5 Z" fill="#f5ef3a"/></g>
<rect x="56" y="462" width="9" height="9" fill="#fff" stroke="#848484" stroke-width="1" transform="translate(.5,.5)" shape-rendering="crispEdges"/>
<path d="M58.5,466.5 h5" stroke="#000" stroke-width="1" shape-rendering="crispEdges"/>
<g transform="translate(71,458.2)"><path d="M0.5,8 L8,3 L15.5,8 L15.5,10 L8,15 L0.5,10 Z" fill="#3558b8"/><path d="M0.5,8 L8,3 L15.5,8 L8,13 Z" fill="#5b80dc"/><ellipse cx="8" cy="7.8" rx="4.4" ry="2.6" fill="#f0ea30" stroke="#8f8a10" stroke-width=".5"/><ellipse cx="8" cy="7.8" rx="2" ry="1.1" fill="#5b80dc" stroke="#8f8a10" stroke-width=".4"/></g>
<g transform="translate(90,474.2)"><path d="M1.5,1.5 V13.5 H13.5" stroke="#202020" stroke-width="1" fill="none"/><path d="M4.6,2.6 H8 V8.3 H12.4 V11.4 H4.6 Z" fill="#fff" stroke="#f01414" stroke-width="1.3"/></g>
<rect x="56" y="494" width="9" height="9" fill="#fff" stroke="#848484" stroke-width="1" transform="translate(.5,.5)" shape-rendering="crispEdges"/>
<path d="M58.5,498.5 h5" stroke="#000" stroke-width="1" shape-rendering="crispEdges"/>
<g transform="translate(71,490.2)"><rect x="3" y="1.5" width="11" height="13" rx="2" fill="#3c62c4"/><ellipse cx="8.5" cy="2.8" rx="5.8" ry="1.9" fill="#f5ef3a"/><path d="M2.7,4.2 L14.3,6.2 L14.3,8.4 L2.7,6.4 Z" fill="#f0ea30"/><path d="M2.7,8.2 L14.3,10.2 L14.3,12.4 L2.7,10.4 Z" fill="#f0ea30"/><path d="M2.7,12 L14.3,13.2 C14.3,15.5 2.7,15.5 2.7,13.4 Z" fill="#ece628"/><path d="M2.7,2.8 L2.7,4.2 L14.3,6.2 L14.3,2.8 C13,5 4,5 2.7,2.8" fill="#e8e224"/></g>
<g transform="translate(90,506.2)"><path d="M1.5,1.5 V13.5 H13.5" stroke="#202020" stroke-width="1" fill="none"/><path d="M4.6,2.6 H8 V8.3 H12.4 V11.4 H4.6 Z" fill="#fff" stroke="#f01414" stroke-width="1.3"/></g>
<path d="M65.5,524 L72.5,530.3 L65.5,537 M72,530.3 H114.5 M121.5,524 L114.5,530.3 L121.5,537" stroke="#0000ff" stroke-width="2.4" fill="none" stroke-linejoin="miter"/>
</svg>
<div class="abs" style="left:9px;top:149px;font-size:11px;font-weight:bold;color:#1c2674;line-height:14px;white-space:nowrap;letter-spacing:-0.05px">Invention Explorer</div>
<div class="abs" style="left:7px;top:165px;width:197px;height:1px;background:#1c2674"></div>
<div class="abs" style="left:49px;top:170px;width:57px;height:16px;border:1px dotted #000"></div>
<div class="abs tt" style="left:53px;top:170px;color:#000">Invent10a</div>
<div class="abs tt" style="left:72px;top:186px;color:#c6c6c6">Axes</div>
<div class="abs tt" style="left:91px;top:202px;color:#c6c6c6">X-Axis</div>
<div class="abs tt" style="left:91px;top:218px;color:#c6c6c6">Y-Axis</div>
<div class="abs tt" style="left:91px;top:234px;color:#c6c6c6">Z-Axis</div>
<div class="abs tt" style="left:72px;top:250px;color:#c6c6c6">Planes</div>
<div class="abs tt" style="left:91px;top:266px;color:#c6c6c6">XY-Plane</div>
<div class="abs tt" style="left:91px;top:282px;color:#c6c6c6">YZ-Plane</div>
<div class="abs" style="left:87px;top:298px;width:54px;height:16px;background:#0a246a"></div>
<div class="abs tt" style="left:91px;top:298px;color:#fff">ZX-Plane</div>
<div class="abs tt" style="left:72px;top:314px;color:#c6c6c6">Points</div>
<div class="abs tt" style="left:91px;top:330px;color:#c6c6c6">Origin</div>
<div class="abs tt" style="left:72px;top:346px;color:#000">Section Views</div>
<div class="abs tt" style="left:72px;top:362px;color:#000">Features</div>
<div class="abs tt" style="left:91px;top:378px;color:#000">Extrusion&lt;1&gt;</div>
<div class="abs tt" style="left:110px;top:394px;color:#000">Sketch&lt;1&gt;</div>
<div class="abs tt" style="left:91px;top:410px;color:#000">Extrusion&lt;2&gt;</div>
<div class="abs tt" style="left:110px;top:426px;color:#000">Sketch&lt;2&gt;</div>
<div class="abs tt" style="left:91px;top:442px;color:#000">Edge Chamfer&lt;3&gt;</div>
<div class="abs tt" style="left:91px;top:458px;color:#000">Revolution&lt;4&gt;</div>
<div class="abs tt" style="left:110px;top:474px;color:#000">Sketch&lt;3&gt;</div>
<div class="abs tt" style="left:91px;top:490px;color:#000">Helical Cut&lt;5&gt;</div>
<div class="abs tt" style="left:110px;top:506px;color:#000">Sketch&lt;4&gt;</div>
<svg class="abs" style="left:0;top:0" width="1281" height="724" viewBox="0 0 1281 724">
<defs>
<linearGradient id="lg" x1="0" y1="0" x2="0.75" y2="1">
<stop offset="0" stop-color="#e8e8e8"/><stop offset=".3" stop-color="#e0e0e1"/><stop offset=".5" stop-color="#cfd1d3"/><stop offset=".66" stop-color="#bcbfc3"/><stop offset=".8" stop-color="#abafb5"/><stop offset=".92" stop-color="#9ca1a8"/><stop offset="1" stop-color="#8f959d"/></linearGradient>
<linearGradient id="wg" x1="0" y1="0" x2="0.7" y2="1">
<stop offset="0" stop-color="#9a9c9e"/><stop offset=".45" stop-color="#888c92"/><stop offset=".62" stop-color="#878f9e"/><stop offset=".75" stop-color="#8a9cb8"/><stop offset="1" stop-color="#8b9fc0"/></linearGradient>
<linearGradient id="endg" gradientUnits="userSpaceOnUse" x1="822" y1="238" x2="898" y2="345">
<stop offset="0" stop-color="#dedede"/><stop offset=".28" stop-color="#b9bbbd"/><stop offset=".6" stop-color="#a2a8b3"/><stop offset="1" stop-color="#8399bd"/></linearGradient>
<linearGradient id="shk" gradientUnits="userSpaceOnUse" x1="527" y1="405" x2="602" y2="540">
<stop offset="0" stop-color="#e2e2e2"/><stop offset=".3" stop-color="#cfd1d4"/><stop offset=".55" stop-color="#aebace"/><stop offset=".75" stop-color="#8aa3c6"/><stop offset="1" stop-color="#819cc2"/></linearGradient>
<linearGradient id="chm" gradientUnits="userSpaceOnUse" x1="395" y1="420" x2="520" y2="650">
<stop offset="0" stop-color="#d8d8d8"/><stop offset=".25" stop-color="#e4e4e4"/><stop offset=".5" stop-color="#c8c8c8"/><stop offset=".8" stop-color="#a8a8a8"/><stop offset="1" stop-color="#9c9c9c"/></linearGradient>
<linearGradient id="chm2" gradientUnits="userSpaceOnUse" x1="384" y1="440" x2="412" y2="440">
<stop offset="0" stop-color="#b4b4b4"/><stop offset=".5" stop-color="#d6d6d6"/><stop offset="1" stop-color="#f2f2f2"/></linearGradient>
<filter id="bl2" x="-20%" y="-20%" width="140%" height="140%"><feGaussianBlur stdDeviation="1.5"/></filter>
<mask id="wm" maskUnits="userSpaceOnUse" x="480" y="380" width="420" height="70"><text x="486.6" y="423.7" font-family="Liberation Sans, sans-serif" font-size="40.5" fill="#fff" stroke="#000" stroke-width="0.55" textLength="403" lengthAdjust="spacingAndGlyphs">Принтер-Плоттер.ру</text></mask>
</defs>
<path d="M815.3,233.8 L845.2,241.6 C853,247 861,257 867.3,267 C874,276 880,286 885,295.7 C890,305 894,313 896,320 C897.5,326 897.6,331 897.1,335.5 C896.5,343 895,349 892.7,354.3 C891.5,356.5 889.5,355.5 888.5,353 L870,340 L800,262 L806,240 Z" fill="url(#endg)"/>
<path d="M815.3,233.8 L845.2,241.6 C853,247 861,257 867.3,267 C874,276 880,286 885,295.7 C890,305 894,313 896,320 C897.5,326 897.6,331 897.1,335.5 C896.5,343 895,349 892.7,354.3 C891.5,356.5 889.5,355.5 888.5,353" stroke="#202020" stroke-width="1.05" fill="none" stroke-linejoin="round" stroke-linecap="round"/>
<path d="M815.3,233.8 C829.3,237.8 877.3,303.8 889.3,339.8 C891.3,345.8 892.3,350.8 891.9,354.8 L875.3,343.8 L806.3,242.8 C805.5,237.3 810.3,233.4 815.3,233.8 Z" fill="url(#lg)"/>
<path d="M806.7,249.8 C804.8,236.8 810.3,233.4 815.3,233.8  C829.3,237.8 877.3,303.8 889.3,339.8 C891.3,345.8 892.3,350.8 891.9,354.8" stroke="#202020" stroke-width="1.05" fill="none" stroke-linejoin="round" stroke-linecap="round"/>
<path d="M809.8,246.6 812.4,249.1 815.1,251.9 817.9,255 820.7,258.3 823.6,261.9 826.6,265.6 829.5,269.6 832.6,273.7 835.6,278 838.6,282.4 841.7,287 844.7,291.7 847.7,296.4 850.7,301.3 853.6,306.1 856.5,311.1 859.3,316 862,320.9 864.7,325.9 867.2,330.8 869.7,335.6 872,340.3 874.2,345 876.3,349.6 878.2,354 880,358.3 881.6,362.5 883,366.4 884.3,370.2 885.3,373.8 L886.4,373.1 886.1,369.1 885.4,365 884.2,360.9 882.8,356.7 881.3,352.2 879.6,347.6 877.8,342.9 875.9,338.1 873.8,333.1 871.6,328.1 869.4,323.1 867,318 864.5,312.9 861.8,307.9 859,302.9 856.2,298 853.3,293.1 850.2,288.4 847,283.8 843.7,279.4 840.4,275.1 837.1,271 833.8,267.1 830.3,263.4 826.8,259.9 823.4,256.7 820.1,253.7 816.6,251 813.2,248.7 809.8,246.6 Z" fill="url(#wg)"/>
<path d="M859,302.9 861.8,307.9 864.5,312.9 867,318 869.4,323.1 871.6,328.1 873.8,333.1 875.9,338.1 877.8,342.9 879.6,347.6 881.3,352.2 882.8,356.7 884.2,360.9 885.4,365 886.1,369.1 886.4,373.1" stroke="#202020" stroke-width="1.05" fill="none" stroke-linejoin="round" stroke-linecap="round" opacity=".8"/>
<path d="M798,238.8 C820,244.8 874.3,333.3 885.3,373.8 Q883.8,376 881.3,374.6 L869.3,364.8 C824.3,302.8 788.5,263.8 789,247.8 C788.2,242.3 793,238.4 798,238.8 Z" fill="url(#lg)"/>
<path d="M792.8,260.2 791.9,258.3 791.1,256.6 790.5,254.9 789.9,253.3 789.5,251.8 789.2,250.4 789,249 789,247.8 C788.2,242.3 793,238.4 798,238.8 C820,244.8 874.3,333.3 885.3,373.8 Q883.8,376 881.3,374.6" stroke="#202020" stroke-width="1.05" fill="none" stroke-linejoin="round" stroke-linecap="round"/>
<clipPath id="cl12"><path d="M798,238.8 C820,244.8 874.3,333.3 885.3,373.8 Q883.8,376 881.3,374.6 L869.3,364.8 C824.3,302.8 788.5,263.8 789,247.8 C788.2,242.3 793,238.4 798,238.8 Z"/></clipPath>
<g clip-path="url(#cl12)"><path d="M815.6,289.7 818.6,294.1 821.7,298.7 824.7,303.4 827.7,308.1 830.7,313 833.6,317.8 836.5,322.8 839.3,327.7 842,332.6 844.7,337.5 847.2,342.4 849.7,347.3 852,352 854.2,356.7 856.3,361.3 858.2,365.7 860,370 861.6,374.2 863,378.1 864.3,381.9 865.3,385.4 L871.6,381.7 872,377.3 871.9,372.8 871.5,368.3 869.9,364.1 868.3,359.7 866.4,355.2 864.5,350.6 862.4,345.8 860.2,341 857.8,336.1 855.4,331.1 852.6,326.3 849.5,321.6 846.2,317 842.8,312.3 839.4,307.8 835.8,303.2 832.1,298.9 828.2,294.8 824.3,290.7 820.4,286.8 Z" fill="#7c8088" opacity=".95" filter="url(#bl2)"/></g>
<path d="M789.8,258.3 792.4,260.8 795.1,263.6 797.8,266.7 800.7,270 803.6,273.6 806.5,277.3 809.5,281.3 812.5,285.4 815.6,289.7 818.6,294.1 821.7,298.7 824.7,303.4 827.7,308.1 830.7,313 833.6,317.8 836.5,322.8 839.3,327.7 842,332.6 844.7,337.5 847.2,342.4 849.7,347.3 852,352 854.2,356.7 856.3,361.3 858.2,365.7 860,370 861.6,374.2 863,378.1 864.3,381.9 865.3,385.4 L866.4,384.8 866.1,380.8 865.4,376.7 864.2,372.6 862.8,368.3 861.3,363.9 859.6,359.3 857.8,354.6 855.9,349.7 853.8,344.8 851.6,339.8 849.4,334.8 847,329.7 844.5,324.6 841.8,319.6 839,314.6 836.2,309.7 833.3,304.8 830.2,300.1 826.9,295.5 823.7,291.1 820.4,286.8 817.1,282.7 813.7,278.8 810.2,275.1 806.8,271.6 803.4,268.4 800.1,265.4 796.6,262.7 793.1,260.4 789.8,258.3 Z" fill="url(#wg)"/>
<path d="M839,314.6 841.8,319.6 844.5,324.6 847,329.7 849.4,334.8 851.6,339.8 853.8,344.8 855.9,349.7 857.8,354.6 859.6,359.3 861.3,363.9 862.8,368.3 864.2,372.6 865.4,376.7 866.1,380.8 866.4,384.8" stroke="#202020" stroke-width="1.05" fill="none" stroke-linejoin="round" stroke-linecap="round" opacity=".8"/>
<path d="M778,250.5 C800,256.5 854.3,344.9 865.3,385.4 Q863.8,387.6 861.3,386.2 L849.3,376.4 C804.3,314.4 768.5,275.5 769,259.5 C768.2,254 773,250.1 778,250.5 Z" fill="url(#lg)"/>
<path d="M772.8,271.9 771.9,270 771.1,268.2 770.4,266.6 769.9,265 769.4,263.5 769.2,262.1 769,260.7 769,259.5 C768.2,254 773,250.1 778,250.5 C800,256.5 854.3,344.9 865.3,385.4 Q863.8,387.6 861.3,386.2" stroke="#202020" stroke-width="1.05" fill="none" stroke-linejoin="round" stroke-linecap="round"/>
<clipPath id="cl11"><path d="M778,250.5 C800,256.5 854.3,344.9 865.3,385.4 Q863.8,387.6 861.3,386.2 L849.3,376.4 C804.3,314.4 768.5,275.5 769,259.5 C768.2,254 773,250.1 778,250.5 Z"/></clipPath>
<g clip-path="url(#cl11)"><path d="M795.6,301.4 798.6,305.8 801.6,310.4 804.7,315.1 807.7,319.8 810.7,324.6 813.6,329.5 816.5,334.4 819.3,339.4 822,344.3 824.7,349.2 827.2,354.1 829.7,359 832,363.7 834.2,368.4 836.3,373 838.2,377.4 840,381.7 841.6,385.8 843,389.8 844.3,393.6 845.3,397.1 L851.6,393.4 852,389 851.9,384.5 851.5,379.9 849.9,375.8 848.3,371.4 846.4,366.9 844.5,362.3 842.4,357.5 840.2,352.7 837.8,347.8 835.4,342.8 832.6,338 829.5,333.3 826.2,328.6 822.8,324 819.3,319.5 815.8,314.9 812.1,310.6 808.2,306.5 804.3,302.4 800.4,298.5 Z" fill="#7c8088" opacity=".95" filter="url(#bl2)"/></g>
<path d="M769.8,270 772.4,272.5 775,275.3 777.8,278.4 780.7,281.7 783.6,285.3 786.5,289 789.5,293 792.5,297.1 795.6,301.4 798.6,305.8 801.6,310.4 804.7,315.1 807.7,319.8 810.7,324.6 813.6,329.5 816.5,334.4 819.3,339.4 822,344.3 824.7,349.2 827.2,354.1 829.7,359 832,363.7 834.2,368.4 836.3,373 838.2,377.4 840,381.7 841.6,385.8 843,389.8 844.3,393.6 845.3,397.1 L846.4,396.5 846.1,392.5 845.4,388.4 844.2,384.3 842.8,380 841.3,375.6 839.6,371 837.8,366.2 835.9,361.4 833.8,356.5 831.6,351.5 829.4,346.4 827,341.3 824.5,336.3 821.8,331.3 819,326.3 816.2,321.3 813.3,316.5 810.2,311.8 806.9,307.2 803.6,302.8 800.4,298.5 797.1,294.4 793.7,290.4 790.2,286.8 786.8,283.3 783.4,280.1 780,277.1 776.5,274.4 773.1,272.1 769.8,270 Z" fill="url(#wg)"/>
<path d="M819,326.3 821.8,331.3 824.5,336.3 827,341.3 829.4,346.4 831.6,351.5 833.8,356.5 835.9,361.4 837.8,366.2 839.6,371 841.3,375.6 842.8,380 844.2,384.3 845.4,388.4 846.1,392.5 846.4,396.5" stroke="#202020" stroke-width="1.05" fill="none" stroke-linejoin="round" stroke-linecap="round" opacity=".8"/>
<path d="M757.9,262.2 C779.9,268.2 834.3,356.6 845.3,397.1 Q843.8,399.3 841.3,397.9 L829.3,388.1 C784.3,326.1 748.4,287.2 748.9,271.2 C748.1,265.7 752.9,261.8 757.9,262.2 Z" fill="url(#lg)"/>
<path d="M752.8,283.6 751.9,281.7 751.1,279.9 750.4,278.3 749.8,276.7 749.4,275.2 749.1,273.8 749,272.4 748.9,271.2 C748.1,265.7 752.9,261.8 757.9,262.2 C779.9,268.2 834.3,356.6 845.3,397.1 Q843.8,399.3 841.3,397.9" stroke="#202020" stroke-width="1.05" fill="none" stroke-linejoin="round" stroke-linecap="round"/>
<clipPath id="cl10"><path d="M757.9,262.2 C779.9,268.2 834.3,356.6 845.3,397.1 Q843.8,399.3 841.3,397.9 L829.3,388.1 C784.3,326.1 748.4,287.2 748.9,271.2 C748.1,265.7 752.9,261.8 757.9,262.2 Z"/></clipPath>
<g clip-path="url(#cl10)"><path d="M775.5,313.1 778.6,317.5 781.6,322.1 784.7,326.7 787.7,331.5 790.6,336.3 793.6,341.2 796.5,346.1 799.3,351.1 802,356 804.7,360.9 807.2,365.8 809.7,370.6 812,375.4 814.2,380.1 816.3,384.6 818.2,389.1 820,393.4 821.6,397.5 823,401.5 824.3,405.2 825.3,408.8 L831.6,405.1 832,400.6 831.9,396.2 831.5,391.6 829.9,387.4 828.3,383.1 826.4,378.6 824.5,373.9 822.4,369.2 820.2,364.4 817.8,359.5 815.4,354.5 812.6,349.7 809.5,345 806.2,340.3 802.8,335.7 799.3,331.1 795.8,326.6 792.1,322.3 788.2,318.2 784.3,314.1 780.3,310.2 Z" fill="#7c8088" opacity=".95" filter="url(#bl2)"/></g>
<path d="M749.7,281.7 752.3,284.2 755,287 757.8,290.1 760.6,293.4 763.5,296.9 766.5,300.7 769.5,304.7 772.5,308.8 775.5,313.1 778.6,317.5 781.6,322.1 784.7,326.7 787.7,331.5 790.6,336.3 793.6,341.2 796.5,346.1 799.3,351.1 802,356 804.7,360.9 807.2,365.8 809.7,370.6 812,375.4 814.2,380.1 816.3,384.6 818.2,389.1 820,393.4 821.6,397.5 823,401.5 824.3,405.2 825.3,408.8 L826.4,408.1 826.1,404.1 825.4,400.1 824.2,396 822.8,391.7 821.3,387.3 819.6,382.7 817.8,377.9 815.9,373.1 813.8,368.2 811.6,363.2 809.3,358.1 807,353 804.5,348 801.7,343 799,338 796.2,333 793.3,328.1 790.2,323.4 786.9,318.9 783.6,314.5 780.3,310.2 777.1,306.1 773.7,302.1 770.2,298.5 766.8,295 763.4,291.8 760,288.8 756.5,286.1 753.1,283.8 749.7,281.7 Z" fill="url(#wg)"/>
<path d="M799,338 801.7,343 804.5,348 807,353 809.3,358.1 811.6,363.2 813.8,368.2 815.9,373.1 817.8,377.9 819.6,382.7 821.3,387.3 822.8,391.7 824.2,396 825.4,400.1 826.1,404.1 826.4,408.1" stroke="#202020" stroke-width="1.05" fill="none" stroke-linejoin="round" stroke-linecap="round" opacity=".8"/>
<path d="M737.9,273.9 C759.9,279.9 814.3,368.3 825.3,408.8 Q823.8,411 821.3,409.6 L809.3,399.8 C764.3,337.8 728.4,298.9 728.9,282.9 C728.1,277.4 732.9,273.5 737.9,273.9 Z" fill="url(#lg)"/>
<path d="M732.7,295.2 731.8,293.4 731,291.6 730.4,290 729.8,288.4 729.4,286.9 729.1,285.5 728.9,284.1 728.9,282.9 C728.1,277.4 732.9,273.5 737.9,273.9 C759.9,279.9 814.3,368.3 825.3,408.8 Q823.8,411 821.3,409.6" stroke="#202020" stroke-width="1.05" fill="none" stroke-linejoin="round" stroke-linecap="round"/>
<clipPath id="cl9"><path d="M737.9,273.9 C759.9,279.9 814.3,368.3 825.3,408.8 Q823.8,411 821.3,409.6 L809.3,399.8 C764.3,337.8 728.4,298.9 728.9,282.9 C728.1,277.4 732.9,273.5 737.9,273.9 Z"/></clipPath>
<g clip-path="url(#cl9)"><path d="M755.5,324.8 758.6,329.2 761.6,333.8 764.6,338.4 767.7,343.2 770.6,348 773.6,352.9 776.4,357.8 779.3,362.7 782,367.7 784.7,372.6 787.2,377.5 789.7,382.3 792,387.1 794.2,391.7 796.3,396.3 798.2,400.8 800,405.1 801.6,409.2 803,413.2 804.3,416.9 805.3,420.5 L811.6,416.7 812,412.3 811.9,407.8 811.5,403.3 809.9,399.1 808.2,394.8 806.4,390.3 804.5,385.6 802.4,380.9 800.2,376.1 797.8,371.1 795.4,366.2 792.6,361.4 789.5,356.7 786.1,352 782.8,347.4 779.3,342.8 775.8,338.3 772.1,334 768.2,329.9 764.2,325.8 760.3,321.9 Z" fill="#7c8088" opacity=".95" filter="url(#bl2)"/></g>
<path d="M729.7,293.4 732.3,295.9 735,298.7 737.8,301.8 740.6,305.1 743.5,308.6 746.5,312.4 749.5,316.4 752.5,320.5 755.5,324.8 758.6,329.2 761.6,333.8 764.6,338.4 767.7,343.2 770.6,348 773.6,352.9 776.4,357.8 779.3,362.7 782,367.7 784.7,372.6 787.2,377.5 789.7,382.3 792,387.1 794.2,391.7 796.3,396.3 798.2,400.8 800,405.1 801.6,409.2 803,413.2 804.3,416.9 805.3,420.5 L806.4,419.8 806.1,415.8 805.4,411.8 804.2,407.7 802.8,403.4 801.3,398.9 799.6,394.3 797.8,389.6 795.8,384.8 793.8,379.9 791.6,374.9 789.3,369.8 787,364.7 784.4,359.7 781.7,354.7 779,349.7 776.1,344.7 773.3,339.8 770.2,335.1 766.9,330.6 763.6,326.2 760.3,321.9 757.1,317.7 753.7,313.8 750.2,310.2 746.7,306.7 743.3,303.5 740,300.5 736.5,297.8 733,295.5 729.7,293.4 Z" fill="url(#wg)"/>
<path d="M779,349.7 781.7,354.7 784.4,359.7 787,364.7 789.3,369.8 791.6,374.9 793.8,379.9 795.8,384.8 797.8,389.6 799.6,394.3 801.3,398.9 802.8,403.4 804.2,407.7 805.4,411.8 806.1,415.8 806.4,419.8" stroke="#202020" stroke-width="1.05" fill="none" stroke-linejoin="round" stroke-linecap="round" opacity=".8"/>
<path d="M717.9,285.6 C739.9,291.6 794.3,380 805.3,420.5 Q803.8,422.7 801.3,421.3 L789.3,411.5 C744.3,349.5 708.4,310.6 708.9,294.6 C708.1,289.1 712.9,285.2 717.9,285.6 Z" fill="url(#lg)"/>
<path d="M712.7,306.9 711.8,305.1 711,303.3 710.3,301.7 709.8,300.1 709.4,298.6 709.1,297.2 708.9,295.8 708.9,294.6 C708.1,289.1 712.9,285.2 717.9,285.6 C739.9,291.6 794.3,380 805.3,420.5 Q803.8,422.7 801.3,421.3" stroke="#202020" stroke-width="1.05" fill="none" stroke-linejoin="round" stroke-linecap="round"/>
<clipPath id="cl8"><path d="M717.9,285.6 C739.9,291.6 794.3,380 805.3,420.5 Q803.8,422.7 801.3,421.3 L789.3,411.5 C744.3,349.5 708.4,310.6 708.9,294.6 C708.1,289.1 712.9,285.2 717.9,285.6 Z"/></clipPath>
<g clip-path="url(#cl8)"><path d="M735.5,336.5 738.5,340.9 741.6,345.5 744.6,350.1 747.6,354.9 750.6,359.7 753.6,364.6 756.4,369.5 759.3,374.4 762,379.4 764.6,384.3 767.2,389.2 769.7,394 772,398.8 774.2,403.4 776.3,408 778.2,412.4 780,416.7 781.6,420.9 783,424.8 784.3,428.6 785.3,432.2 L791.6,428.4 792,424 791.9,419.5 791.5,415 789.9,410.8 788.2,406.4 786.4,401.9 784.5,397.3 782.4,392.6 780.1,387.7 777.8,382.8 775.4,377.9 772.6,373 769.5,368.3 766.1,363.7 762.7,359.1 759.3,354.5 755.8,350 752,345.7 748.1,341.5 744.2,337.5 740.3,333.6 Z" fill="#7c8088" opacity=".95" filter="url(#bl2)"/></g>
<path d="M709.7,305.1 712.3,307.6 715,310.4 717.7,313.5 720.6,316.8 723.5,320.3 726.4,324.1 729.4,328 732.5,332.2 735.5,336.5 738.5,340.9 741.6,345.5 744.6,350.1 747.6,354.9 750.6,359.7 753.6,364.6 756.4,369.5 759.3,374.4 762,379.4 764.6,384.3 767.2,389.2 769.7,394 772,398.8 774.2,403.4 776.3,408 778.2,412.4 780,416.7 781.6,420.9 783,424.8 784.3,428.6 785.3,432.2 L786.4,431.5 786.1,427.5 785.4,423.4 784.2,419.3 782.8,415.1 781.3,410.6 779.6,406 777.8,401.3 775.8,396.5 773.8,391.5 771.6,386.5 769.3,381.5 767,376.4 764.4,371.3 761.7,366.3 759,361.4 756.1,356.4 753.3,351.5 750.1,346.8 746.9,342.3 743.6,337.9 740.3,333.6 737,329.4 733.6,325.5 730.2,321.9 726.7,318.4 723.3,315.2 720,312.2 716.5,309.5 713,307.2 709.7,305.1 Z" fill="url(#wg)"/>
<path d="M759,361.4 761.7,366.3 764.4,371.3 767,376.4 769.3,381.5 771.6,386.5 773.8,391.5 775.8,396.5 777.8,401.3 779.6,406 781.3,410.6 782.8,415.1 784.2,419.3 785.4,423.4 786.1,427.5 786.4,431.5" stroke="#202020" stroke-width="1.05" fill="none" stroke-linejoin="round" stroke-linecap="round" opacity=".8"/>
<path d="M697.8,297.3 C719.8,303.3 774.3,391.7 785.3,432.2 Q783.8,434.4 781.3,433 L769.3,423.2 C724.3,361.2 688.3,322.3 688.8,306.3 C688,300.8 692.8,296.9 697.8,297.3 Z" fill="url(#lg)"/>
<path d="M692.7,318.6 691.8,316.8 691,315 690.3,313.4 689.8,311.8 689.3,310.3 689,308.9 688.9,307.5 688.8,306.3 C688,300.8 692.8,296.9 697.8,297.3 C719.8,303.3 774.3,391.7 785.3,432.2 Q783.8,434.4 781.3,433" stroke="#202020" stroke-width="1.05" fill="none" stroke-linejoin="round" stroke-linecap="round"/>
<clipPath id="cl7"><path d="M697.8,297.3 C719.8,303.3 774.3,391.7 785.3,432.2 Q783.8,434.4 781.3,433 L769.3,423.2 C724.3,361.2 688.3,322.3 688.8,306.3 C688,300.8 692.8,296.9 697.8,297.3 Z"/></clipPath>
<g clip-path="url(#cl7)"><path d="M715.5,348.2 718.5,352.6 721.6,357.1 724.6,361.8 727.6,366.6 730.6,371.4 733.5,376.3 736.4,381.2 739.2,386.1 742,391.1 744.6,396 747.2,400.9 749.7,405.7 752,410.4 754.2,415.1 756.3,419.7 758.2,424.1 760,428.4 761.6,432.6 763,436.5 764.3,440.3 765.3,443.8 L771.6,440.1 772,435.7 771.9,431.2 771.5,426.7 769.9,422.5 768.2,418.1 766.4,413.6 764.5,409 762.4,404.3 760.1,399.4 757.8,394.5 755.4,389.6 752.6,384.7 749.4,380 746.1,375.4 742.7,370.8 739.3,366.2 735.8,361.7 732,357.4 728.1,353.2 724.2,349.2 720.3,345.3 Z" fill="#7c8088" opacity=".95" filter="url(#bl2)"/></g>
<path d="M689.6,316.8 692.2,319.3 694.9,322.1 697.7,325.2 700.6,328.5 703.5,332 706.4,335.8 709.4,339.7 712.4,343.9 715.5,348.2 718.5,352.6 721.6,357.1 724.6,361.8 727.6,366.6 730.6,371.4 733.5,376.3 736.4,381.2 739.2,386.1 742,391.1 744.6,396 747.2,400.9 749.7,405.7 752,410.4 754.2,415.1 756.3,419.7 758.2,424.1 760,428.4 761.6,432.6 763,436.5 764.3,440.3 765.3,443.8 L766.4,443.2 766.1,439.2 765.4,435.1 764.2,431 762.8,426.7 761.3,422.3 759.6,417.7 757.8,413 755.8,408.2 753.8,403.2 751.6,398.2 749.3,393.2 747,388.1 744.4,383 741.7,378 738.9,373 736.1,368.1 733.2,363.2 730.1,358.5 726.9,354 723.6,349.6 720.3,345.3 717,341.1 713.6,337.2 710.1,333.6 706.7,330.1 703.3,326.9 699.9,323.9 696.4,321.2 693,318.9 689.6,316.8 Z" fill="url(#wg)"/>
<path d="M738.9,373 741.7,378 744.4,383 747,388.1 749.3,393.2 751.6,398.2 753.8,403.2 755.8,408.2 757.8,413 759.6,417.7 761.3,422.3 762.8,426.7 764.2,431 765.4,435.1 766.1,439.2 766.4,443.2" stroke="#202020" stroke-width="1.05" fill="none" stroke-linejoin="round" stroke-linecap="round" opacity=".8"/>
<path d="M677.8,309 C699.8,315 754.3,403.3 765.3,443.8 Q763.8,446 761.3,444.6 L749.3,434.8 C704.3,372.8 668.3,334 668.8,318 C668,312.5 672.8,308.6 677.8,309 Z" fill="url(#lg)"/>
<path d="M672.7,330.3 671.8,328.5 671,326.7 670.3,325.1 669.7,323.5 669.3,322 669,320.6 668.8,319.2 668.8,318 C668,312.5 672.8,308.6 677.8,309 C699.8,315 754.3,403.3 765.3,443.8 Q763.8,446 761.3,444.6" stroke="#202020" stroke-width="1.05" fill="none" stroke-linejoin="round" stroke-linecap="round"/>
<clipPath id="cl6"><path d="M677.8,309 C699.8,315 754.3,403.3 765.3,443.8 Q763.8,446 761.3,444.6 L749.3,434.8 C704.3,372.8 668.3,334 668.8,318 C668,312.5 672.8,308.6 677.8,309 Z"/></clipPath>
<g clip-path="url(#cl6)"><path d="M695.5,359.9 698.5,364.3 701.6,368.8 704.6,373.5 707.6,378.3 710.6,383.1 713.5,388 716.4,392.9 719.2,397.8 722,402.7 724.6,407.7 727.2,412.5 729.7,417.4 732,422.1 734.2,426.8 736.3,431.4 738.2,435.8 740,440.1 741.6,444.2 743,448.2 744.3,452 745.3,455.5 L751.6,451.8 752,447.4 751.9,442.9 751.5,438.3 749.9,434.2 748.2,429.8 746.4,425.3 744.5,420.7 742.4,415.9 740.1,411.1 737.8,406.2 735.4,401.2 732.6,396.4 729.4,391.7 726.1,387.1 722.7,382.5 719.3,377.9 715.8,373.4 712,369.1 708.1,364.9 704.2,360.9 700.3,357 Z" fill="#7c8088" opacity=".95" filter="url(#bl2)"/></g>
<path d="M669.6,328.5 672.2,331 674.9,333.8 677.7,336.9 680.5,340.2 683.4,343.7 686.4,347.5 689.4,351.4 692.4,355.6 695.5,359.9 698.5,364.3 701.6,368.8 704.6,373.5 707.6,378.3 710.6,383.1 713.5,388 716.4,392.9 719.2,397.8 722,402.7 724.6,407.7 727.2,412.5 729.7,417.4 732,422.1 734.2,426.8 736.3,431.4 738.2,435.8 740,440.1 741.6,444.2 743,448.2 744.3,452 745.3,455.5 L746.4,454.9 746.1,450.9 745.4,446.8 744.2,442.7 742.8,438.4 741.3,434 739.6,429.4 737.8,424.7 735.8,419.8 733.8,414.9 731.6,409.9 729.3,404.9 726.9,399.8 724.4,394.7 721.7,389.7 718.9,384.7 716.1,379.8 713.2,374.9 710.1,370.2 706.8,365.7 703.6,361.3 700.3,357 697,352.8 693.6,348.9 690.1,345.3 686.7,341.8 683.3,338.6 679.9,335.5 676.4,332.9 673,330.6 669.6,328.5 Z" fill="url(#wg)"/>
<path d="M718.9,384.7 721.7,389.7 724.4,394.7 726.9,399.8 729.3,404.9 731.6,409.9 733.8,414.9 735.8,419.8 737.8,424.7 739.6,429.4 741.3,434 742.8,438.4 744.2,442.7 745.4,446.8 746.1,450.9 746.4,454.9" stroke="#202020" stroke-width="1.05" fill="none" stroke-linejoin="round" stroke-linecap="round" opacity=".8"/>
<path d="M657.8,320.7 C679.8,326.7 734.3,415 745.3,455.5 Q743.8,457.7 741.3,456.3 L729.3,446.5 C684.3,384.5 648.3,345.7 648.8,329.7 C648,324.2 652.8,320.3 657.8,320.7 Z" fill="url(#lg)"/>
<path d="M652.6,342 651.7,340.2 650.9,338.4 650.3,336.8 649.7,335.2 649.3,333.7 649,332.3 648.8,330.9 648.8,329.7 C648,324.2 652.8,320.3 657.8,320.7 C679.8,326.7 734.3,415 745.3,455.5 Q743.8,457.7 741.3,456.3" stroke="#202020" stroke-width="1.05" fill="none" stroke-linejoin="round" stroke-linecap="round"/>
<clipPath id="cl5"><path d="M657.8,320.7 C679.8,326.7 734.3,415 745.3,455.5 Q743.8,457.7 741.3,456.3 L729.3,446.5 C684.3,384.5 648.3,345.7 648.8,329.7 C648,324.2 652.8,320.3 657.8,320.7 Z"/></clipPath>
<g clip-path="url(#cl5)"><path d="M675.4,371.5 678.5,376 681.5,380.5 684.6,385.2 687.6,389.9 690.6,394.8 693.5,399.6 696.4,404.6 699.2,409.5 702,414.4 704.6,419.3 707.2,424.2 709.7,429.1 712,433.8 714.2,438.5 716.3,443 718.2,447.5 720,451.8 721.6,455.9 723,459.9 724.3,463.6 725.3,467.2 L731.6,463.5 732,459 731.9,454.6 731.5,450 729.9,445.8 728.2,441.5 726.4,437 724.5,432.4 722.3,427.6 720.1,422.8 717.8,417.9 715.4,412.9 712.6,408.1 709.4,403.4 706.1,398.8 702.7,394.2 699.3,389.6 695.8,385.1 692,380.8 688.1,376.6 684.2,372.6 680.3,368.7 Z" fill="#7c8088" opacity=".95" filter="url(#bl2)"/></g>
<path d="M649.6,340.2 652.2,342.7 654.9,345.5 657.7,348.6 660.5,351.9 663.4,355.4 666.4,359.2 669.4,363.1 672.4,367.3 675.4,371.5 678.5,376 681.5,380.5 684.6,385.2 687.6,389.9 690.6,394.8 693.5,399.6 696.4,404.6 699.2,409.5 702,414.4 704.6,419.3 707.2,424.2 709.7,429.1 712,433.8 714.2,438.5 716.3,443 718.2,447.5 720,451.8 721.6,455.9 723,459.9 724.3,463.6 725.3,467.2 L726.4,466.5 726.1,462.5 725.4,458.5 724.2,454.4 722.8,450.1 721.3,445.7 719.6,441.1 717.8,436.3 715.8,431.5 713.8,426.6 711.6,421.6 709.3,416.5 706.9,411.5 704.4,406.4 701.7,401.4 698.9,396.4 696.1,391.5 693.2,386.6 690.1,381.9 686.8,377.4 683.5,373 680.3,368.7 677,364.5 673.6,360.6 670.1,357 666.6,353.5 663.2,350.3 659.9,347.2 656.4,344.6 652.9,342.3 649.6,340.2 Z" fill="url(#wg)"/>
<path d="M698.9,396.4 701.7,401.4 704.4,406.4 706.9,411.5 709.3,416.5 711.6,421.6 713.8,426.6 715.8,431.5 717.8,436.3 719.6,441.1 721.3,445.7 722.8,450.1 724.2,454.4 725.4,458.5 726.1,462.5 726.4,466.5" stroke="#202020" stroke-width="1.05" fill="none" stroke-linejoin="round" stroke-linecap="round" opacity=".8"/>
<path d="M637.8,332.4 C659.8,338.4 714.3,426.7 725.3,467.2 Q723.8,469.4 721.3,468 L709.3,458.2 C664.3,396.2 628.2,357.4 628.8,341.4 C628,335.9 632.8,332 637.8,332.4 Z" fill="url(#lg)"/>
<path d="M632.6,353.7 631.7,351.9 630.9,350.1 630.2,348.5 629.7,346.9 629.2,345.4 628.9,344 628.8,342.6 628.8,341.4 C628,335.9 632.8,332 637.8,332.4 C659.8,338.4 714.3,426.7 725.3,467.2 Q723.8,469.4 721.3,468" stroke="#202020" stroke-width="1.05" fill="none" stroke-linejoin="round" stroke-linecap="round"/>
<clipPath id="cl4"><path d="M637.8,332.4 C659.8,338.4 714.3,426.7 725.3,467.2 Q723.8,469.4 721.3,468 L709.3,458.2 C664.3,396.2 628.2,357.4 628.8,341.4 C628,335.9 632.8,332 637.8,332.4 Z"/></clipPath>
<g clip-path="url(#cl4)"><path d="M655.4,383.2 658.5,387.7 661.5,392.2 664.6,396.9 667.6,401.6 670.6,406.5 673.5,411.3 676.4,416.2 679.2,421.2 682,426.1 684.6,431 687.2,435.9 689.6,440.7 692,445.5 694.2,450.2 696.3,454.7 698.2,459.2 700,463.5 701.6,467.6 703,471.6 704.3,475.3 705.3,478.9 L711.6,475.1 712,470.7 711.9,466.2 711.5,461.7 709.9,457.5 708.2,453.2 706.4,448.7 704.5,444 702.3,439.3 700.1,434.5 697.8,429.6 695.4,424.6 692.6,419.8 689.4,415.1 686.1,410.5 682.7,405.8 679.2,401.3 675.7,396.8 672,392.5 668.1,388.3 664.2,384.3 660.2,380.4 Z" fill="#7c8088" opacity=".95" filter="url(#bl2)"/></g>
<path d="M629.6,351.9 632.2,354.4 634.9,357.2 637.6,360.3 640.5,363.6 643.4,367.1 646.4,370.9 649.4,374.8 652.4,379 655.4,383.2 658.5,387.7 661.5,392.2 664.6,396.9 667.6,401.6 670.6,406.5 673.5,411.3 676.4,416.2 679.2,421.2 682,426.1 684.6,431 687.2,435.9 689.6,440.7 692,445.5 694.2,450.2 696.3,454.7 698.2,459.2 700,463.5 701.6,467.6 703,471.6 704.3,475.3 705.3,478.9 L706.4,478.2 706.1,474.2 705.4,470.2 704.2,466.1 702.8,461.8 701.3,457.3 699.6,452.7 697.8,448 695.8,443.2 693.8,438.3 691.6,433.3 689.3,428.2 686.9,423.1 684.4,418.1 681.7,413.1 678.9,408.1 676.1,403.2 673.2,398.3 670.1,393.6 666.8,389.1 663.5,384.7 660.2,380.4 657,376.2 653.6,372.3 650.1,368.7 646.6,365.2 643.2,362 639.9,358.9 636.3,356.3 632.9,354 629.6,351.9 Z" fill="url(#wg)"/>
<path d="M678.9,408.1 681.7,413.1 684.4,418.1 686.9,423.1 689.3,428.2 691.6,433.3 693.8,438.3 695.8,443.2 697.8,448 699.6,452.7 701.3,457.3 702.8,461.8 704.2,466.1 705.4,470.2 706.1,474.2 706.4,478.2" stroke="#202020" stroke-width="1.05" fill="none" stroke-linejoin="round" stroke-linecap="round" opacity=".8"/>
<path d="M617.7,344.1 C639.7,350.1 694.3,438.4 705.3,478.9 Q703.8,481.1 701.3,479.7 L689.3,469.9 C644.3,407.9 608.2,369.1 608.7,353.1 C607.9,347.6 612.7,343.7 617.7,344.1 Z" fill="url(#lg)"/>
<path d="M612.6,365.4 611.7,363.6 610.9,361.8 610.2,360.2 609.6,358.6 609.2,357.1 608.9,355.7 608.8,354.3 608.7,353.1 C607.9,347.6 612.7,343.7 617.7,344.1 C639.7,350.1 694.3,438.4 705.3,478.9 Q703.8,481.1 701.3,479.7" stroke="#202020" stroke-width="1.05" fill="none" stroke-linejoin="round" stroke-linecap="round"/>
<clipPath id="cl3"><path d="M617.7,344.1 C639.7,350.1 694.3,438.4 705.3,478.9 Q703.8,481.1 701.3,479.7 L689.3,469.9 C644.3,407.9 608.2,369.1 608.7,353.1 C607.9,347.6 612.7,343.7 617.7,344.1 Z"/></clipPath>
<g clip-path="url(#cl3)"><path d="M635.4,394.9 638.5,399.4 641.5,403.9 644.6,408.6 647.6,413.3 650.6,418.1 653.5,423 656.4,427.9 659.2,432.9 662,437.8 664.6,442.7 667.2,447.6 669.6,452.4 672,457.2 674.2,461.8 676.3,466.4 678.2,470.8 680,475.1 681.6,479.3 683,483.2 684.3,487 685.3,490.6 L691.6,486.8 692,482.4 691.9,477.9 691.5,473.4 689.9,469.2 688.2,464.9 686.4,460.3 684.4,455.7 682.3,451 680.1,446.2 677.8,441.2 675.4,436.3 672.6,431.5 669.4,426.8 666.1,422.1 662.7,417.5 659.2,413 655.7,408.5 652,404.1 648.1,400 644.1,396 640.2,392.1 Z" fill="#7c8088" opacity=".95" filter="url(#bl2)"/></g>
<path d="M609.5,363.6 612.1,366.1 614.8,368.9 617.6,372 620.5,375.3 623.4,378.8 626.3,382.6 629.3,386.5 632.4,390.6 635.4,394.9 638.5,399.4 641.5,403.9 644.6,408.6 647.6,413.3 650.6,418.1 653.5,423 656.4,427.9 659.2,432.9 662,437.8 664.6,442.7 667.2,447.6 669.6,452.4 672,457.2 674.2,461.8 676.3,466.4 678.2,470.8 680,475.1 681.6,479.3 683,483.2 684.3,487 685.3,490.6 L686.4,489.9 686.1,485.9 685.4,481.8 684.2,477.7 682.8,473.5 681.3,469 679.6,464.4 677.8,459.7 675.8,454.9 673.8,450 671.6,445 669.3,439.9 666.9,434.8 664.4,429.8 661.7,424.8 658.9,419.8 656.1,414.9 653.2,410 650.1,405.3 646.8,400.8 643.5,396.3 640.2,392.1 636.9,387.9 633.5,384 630,380.4 626.6,376.9 623.2,373.7 619.8,370.6 616.3,368 612.9,365.7 609.5,363.6 Z" fill="url(#wg)"/>
<path d="M658.9,419.8 661.7,424.8 664.4,429.8 666.9,434.8 669.3,439.9 671.6,445 673.8,450 675.8,454.9 677.8,459.7 679.6,464.4 681.3,469 682.8,473.5 684.2,477.7 685.4,481.8 686.1,485.9 686.4,489.9" stroke="#202020" stroke-width="1.05" fill="none" stroke-linejoin="round" stroke-linecap="round" opacity=".8"/>
<path d="M597.7,355.8 C619.7,361.8 674.3,450.1 685.3,490.6 Q683.8,492.8 681.3,491.4 L669.3,481.6 C624.3,419.6 588.2,380.8 588.7,364.8 C587.9,359.3 592.7,355.4 597.7,355.8 Z" fill="url(#lg)"/>
<path d="M592.6,377.1 591.6,375.3 590.8,373.5 590.2,371.9 589.6,370.3 589.2,368.8 588.9,367.4 588.7,366 588.7,364.8 C587.9,359.3 592.7,355.4 597.7,355.8 C619.7,361.8 674.3,450.1 685.3,490.6 Q683.8,492.8 681.3,491.4" stroke="#202020" stroke-width="1.05" fill="none" stroke-linejoin="round" stroke-linecap="round"/>
<clipPath id="cl2"><path d="M597.7,355.8 C619.7,361.8 674.3,450.1 685.3,490.6 Q683.8,492.8 681.3,491.4 L669.3,481.6 C624.3,419.6 588.2,380.8 588.7,364.8 C587.9,359.3 592.7,355.4 597.7,355.8 Z"/></clipPath>
<g clip-path="url(#cl2)"><path d="M615.4,406.6 618.4,411.1 621.5,415.6 624.5,420.3 627.6,425 630.5,429.8 633.5,434.7 636.4,439.6 639.2,444.6 641.9,449.5 644.6,454.4 647.2,459.3 649.6,464.1 652,468.9 654.2,473.5 656.3,478.1 658.2,482.5 660,486.8 661.6,491 663,494.9 664.3,498.7 665.3,502.2 L671.6,498.5 672,494.1 671.9,489.6 671.5,485.1 669.9,480.9 668.2,476.5 666.4,472 664.4,467.4 662.3,462.7 660.1,457.8 657.8,452.9 655.4,448 652.5,443.1 649.4,438.5 646.1,433.8 642.7,429.2 639.2,424.7 635.7,420.1 632,415.8 628,411.7 624.1,407.7 620.2,403.8 Z" fill="#7c8088" opacity=".95" filter="url(#bl2)"/></g>
<path d="M589.5,375.3 592.1,377.8 594.8,380.6 597.6,383.7 600.4,387 603.3,390.5 606.3,394.3 609.3,398.2 612.3,402.3 615.4,406.6 618.4,411.1 621.5,415.6 624.5,420.3 627.6,425 630.5,429.8 633.5,434.7 636.4,439.6 639.2,444.6 641.9,449.5 644.6,454.4 647.2,459.3 649.6,464.1 652,468.9 654.2,473.5 656.3,478.1 658.2,482.5 660,486.8 661.6,491 663,494.9 664.3,498.7 665.3,502.2 L666.4,501.6 666.1,497.6 665.4,493.5 664.2,489.4 662.8,485.1 661.3,480.7 659.6,476.1 657.8,471.4 655.8,466.6 653.8,461.6 651.6,456.6 649.3,451.6 646.9,446.5 644.4,441.5 641.7,436.5 638.9,431.5 636,426.5 633.2,421.7 630.1,417 626.8,412.5 623.5,408 620.2,403.8 616.9,399.6 613.5,395.7 610,392 606.6,388.6 603.2,385.3 599.8,382.3 596.3,379.7 592.9,377.4 589.5,375.3 Z" fill="url(#wg)"/>
<path d="M638.9,431.5 641.7,436.5 644.4,441.5 646.9,446.5 649.3,451.6 651.6,456.6 653.8,461.6 655.8,466.6 657.8,471.4 659.6,476.1 661.3,480.7 662.8,485.1 664.2,489.4 665.4,493.5 666.1,497.6 666.4,501.6" stroke="#202020" stroke-width="1.05" fill="none" stroke-linejoin="round" stroke-linecap="round" opacity=".8"/>
<path d="M577.7,367.5 C599.7,373.5 654.3,461.7 665.3,502.2 Q663.8,504.4 661.3,503 L649.3,493.2 C604.3,431.2 568.2,392.5 568.7,376.5 C567.9,371 572.7,367.1 577.7,367.5 Z" fill="url(#lg)"/>
<path d="M572.5,388.8 571.6,387 570.8,385.2 570.1,383.6 569.6,382 569.2,380.5 568.9,379.1 568.7,377.7 568.7,376.5 C567.9,371 572.7,367.1 577.7,367.5 C599.7,373.5 654.3,461.7 665.3,502.2 Q663.8,504.4 661.3,503" stroke="#202020" stroke-width="1.05" fill="none" stroke-linejoin="round" stroke-linecap="round"/>
<clipPath id="cl1"><path d="M577.7,367.5 C599.7,373.5 654.3,461.7 665.3,502.2 Q663.8,504.4 661.3,503 L649.3,493.2 C604.3,431.2 568.2,392.5 568.7,376.5 C567.9,371 572.7,367.1 577.7,367.5 Z"/></clipPath>
<g clip-path="url(#cl1)"><path d="M595.4,418.3 598.4,422.7 601.5,427.3 604.5,432 607.5,436.7 610.5,441.5 613.5,446.4 616.4,451.3 619.2,456.2 621.9,461.2 624.6,466.1 627.2,471 629.6,475.8 632,480.5 634.2,485.2 636.3,489.8 638.2,494.2 640,498.5 641.6,502.6 643,506.6 644.3,510.4 645.3,513.9 L651.6,510.2 652,505.8 651.9,501.3 651.5,496.7 649.9,492.6 648.2,488.2 646.4,483.7 644.4,479.1 642.3,474.4 640.1,469.5 637.8,464.6 635.3,459.7 632.5,454.8 629.4,450.1 626.1,445.5 622.7,440.9 619.2,436.3 615.7,431.8 611.9,427.5 608,423.4 604.1,419.4 600.2,415.4 Z" fill="#7c8088" opacity=".95" filter="url(#bl2)"/></g>
<path d="M569.5,387 572.1,389.5 574.8,392.3 577.6,395.4 580.4,398.7 583.3,402.2 586.3,406 589.3,409.9 592.3,414 595.4,418.3 598.4,422.7 601.5,427.3 604.5,432 607.5,436.7 610.5,441.5 613.5,446.4 616.4,451.3 619.2,456.2 621.9,461.2 624.6,466.1 627.2,471 629.6,475.8 632,480.5 634.2,485.2 636.3,489.8 638.2,494.2 640,498.5 641.6,502.6 643,506.6 644.3,510.4 645.3,513.9 L646.4,513.3 646.1,509.3 645.4,505.2 644.2,501.1 642.8,496.8 641.3,492.4 639.6,487.8 637.8,483.1 635.8,478.2 633.7,473.3 631.6,468.3 629.3,463.3 626.9,458.2 624.4,453.1 621.7,448.1 618.9,443.2 616,438.2 613.2,433.4 610,428.7 606.8,424.1 603.5,419.7 600.2,415.4 596.9,411.3 593.5,407.4 590,403.7 586.5,400.3 583.1,397 579.8,394 576.3,391.4 572.8,389.1 569.5,387 Z" fill="url(#wg)"/>
<path d="M618.9,443.2 621.7,448.1 624.4,453.1 626.9,458.2 629.3,463.3 631.6,468.3 633.7,473.3 635.8,478.2 637.8,483.1 639.6,487.8 641.3,492.4 642.8,496.8 644.2,501.1 645.4,505.2 646.1,509.3 646.4,513.3" stroke="#202020" stroke-width="1.05" fill="none" stroke-linejoin="round" stroke-linecap="round" opacity=".8"/>
<path d="M557.6,379.2 C579.6,385.2 634.3,473.4 645.3,513.9 Q643.8,516.1 641.3,514.7 L629.3,504.9 C584.3,442.9 548.1,404.2 548.6,388.2 C547.8,382.7 552.6,378.8 557.6,379.2 Z" fill="url(#lg)"/>
<path d="M552.5,400.5 551.6,398.7 550.8,396.9 550.1,395.3 549.6,393.7 549.1,392.2 548.8,390.8 548.7,389.4 548.6,388.2 C547.8,382.7 552.6,378.8 557.6,379.2 C579.6,385.2 634.3,473.4 645.3,513.9 Q643.8,516.1 641.3,514.7" stroke="#202020" stroke-width="1.05" fill="none" stroke-linejoin="round" stroke-linecap="round"/>
<path d="M512,401.5 C520,403 530,409 537.5,417.5 L575,440 L612,505 L608,539.5 L587,549.2 L515,424 Z" fill="url(#shk)"/>
<path d="M512,401.5 C520,403 530,409 537.5,417.5 C541,421 544,425 547,429" stroke="#202020" stroke-width="1.05" fill="none" stroke-linejoin="round" stroke-linecap="round"/>
<path d="M606.6,522 L608,539.5 L587,549.2" stroke="#202020" stroke-width="1.05" fill="none" stroke-linejoin="round" stroke-linecap="round"/>
<clipPath id="cl0"><path d="M557.6,379.2 C579.6,385.2 634.3,473.4 645.3,513.9 Q643.8,516.1 641.3,514.7 L629.3,504.9 C584.3,442.9 548.1,404.2 548.6,388.2 C547.8,382.7 552.6,378.8 557.6,379.2 Z"/></clipPath>
<g clip-path="url(#cl0)"><path d="M575.3,430 578.4,434.4 581.5,439 584.5,443.6 587.5,448.4 590.5,453.2 593.5,458.1 596.4,463 599.2,467.9 601.9,472.9 604.6,477.8 607.2,482.6 609.6,487.5 612,492.2 614.2,496.9 616.3,501.4 618.2,505.9 620,510.2 621.6,514.3 623,518.3 624.3,522 625.3,525.6 L631.6,521.9 632,517.4 631.9,513 631.5,508.4 629.9,504.2 628.2,499.9 626.4,495.4 624.4,490.8 622.3,486 620.1,481.2 617.8,476.3 615.3,471.3 612.5,466.5 609.4,461.8 606,457.2 602.7,452.6 599.2,448 595.7,443.5 591.9,439.2 588,435.1 584.1,431 580.2,427.1 Z" fill="#7c8088" opacity=".95" filter="url(#bl2)"/></g>
<path d="M549.4,398.7 552.1,401.2 554.8,404 557.5,407.1 560.4,410.4 563.3,413.9 566.3,417.7 569.3,421.6 572.3,425.7 575.3,430 578.4,434.4 581.5,439 584.5,443.6 587.5,448.4 590.5,453.2 593.5,458.1 596.4,463 599.2,467.9 601.9,472.9 604.6,477.8 607.2,482.6 609.6,487.5 612,492.2 614.2,496.9 616.3,501.4 618.2,505.9 620,510.2 621.6,514.3 623,518.3 624.3,522 625.3,525.6 L626.4,524.9 626.1,520.9 625.4,516.9 624.2,512.8 622.8,508.5 621.3,504.1 619.6,499.5 617.8,494.8 615.8,489.9 613.7,485 611.6,480 609.3,475 606.9,469.9 604.4,464.8 601.6,459.8 598.9,454.9 596,449.9 593.1,445 590,440.4 586.7,435.8 583.4,431.4 580.2,427.1 576.9,423 573.5,419.1 570,415.4 566.5,412 563.1,408.7 559.8,405.7 556.2,403.1 552.8,400.8 549.4,398.7 Z" fill="url(#wg)"/>
<path d="M598.9,454.9 601.6,459.8 604.4,464.8 606.9,469.9 609.3,475 611.6,480 613.7,485 615.8,489.9 617.8,494.8 619.6,499.5 621.3,504.1 622.8,508.5 624.2,512.8 625.4,516.9 626.1,520.9 626.4,524.9" stroke="#202020" stroke-width="1.05" fill="none" stroke-linejoin="round" stroke-linecap="round" opacity=".8"/>
<path d="M537.6,390.9 C559.6,396.9 614.3,485.1 625.3,525.6 Q623.8,527.8 621.3,526.4 L609.3,516.6 C587.3,468.6 531.6,413.9 528.6,399.9 C527.8,394.4 532.6,390.5 537.6,390.9 Z" fill="url(#lg)"/>
<path d="M609.3,516.6 C587.3,468.6 531.6,413.9 528.6,399.9 C527.8,394.4 532.6,390.5 537.6,390.9 C559.6,396.9 614.3,485.1 625.3,525.6 Q623.8,527.8 621.3,526.4" stroke="#202020" stroke-width="1.05" fill="none" stroke-linejoin="round" stroke-linecap="round"/>
<path d="M535,409.6 536.9,412.3 539.1,415.2 541.5,418.4 544.1,421.7 546.9,425.2 549.8,428.9 552.9,432.7 556.1,436.7 559.3,440.8 562.7,445 566.2,449.3 569.6,453.8 573.2,458.3 576.7,462.9 580.2,467.6 583.6,472.4 587,477.2 590.4,482 593.6,486.9 596.8,491.8 599.8,496.7 602.7,501.5 605.4,506.4 607.9,511.3 610.2,516.1" stroke="#2a2a2a" stroke-width="4.2" fill="none" stroke-linecap="round"/>
<path d="M535,409.6 536.9,412.3 539.1,415.2 541.5,418.4 544.1,421.7 546.9,425.2 549.8,428.9 552.9,432.7 556.1,436.7 559.3,440.8 562.7,445 566.2,449.3 569.6,453.8 573.2,458.3 576.7,462.9 580.2,467.6 583.6,472.4 587,477.2 590.4,482 593.6,486.9 596.8,491.8 599.8,496.7 602.7,501.5 605.4,506.4 607.9,511.3 610.2,516.1" stroke="#878b91" stroke-width="2.5" fill="none" stroke-linecap="round"/>
<path d="M387.7,411.3 C384,424 383,440 386.6,457.2 C390,474 396,488 405.4,510.3 C418,533 436,563 450.5,586.9 C466,609 480,626 497.4,638.6 C506,645 515,650 524,651.5 L516.2,584.5 L448.5,463.9 L387.7,411.3 Z" fill="url(#chm)"/>
<path d="M387.7,411.3 C384,424 383,440 386.6,457.2 L392.5,455.5 C396,452.5 400,452.5 404,455 L411,461.7 L410.9,442.9 C402,434 394,423 387.7,411.3 Z" fill="url(#chm2)"/>
<g transform="translate(443.3,538.1) rotate(59.6)"><ellipse cx="0" cy="0" rx="98.3" ry="22.6" fill="#a9a9a9" stroke="#242424" stroke-width="0.9"/></g>
<path d="M458.8,369.3 L387.7,411.3 C395,427 418,455 448.5,463.9 L518,423.5 C503,402 474,376 458.8,369.3 Z" fill="#ececec"/>
<path d="M448.5,463.9 L518,423.5 C538,442 575,497 586.7,544.6 L516.2,584.5 C500,566 470,525 448.5,463.9 Z" fill="#b9c4d4"/>
<path d="M516.2,584.5 L586.7,544.6 C595,565 599,590 596.1,609.2 L524,651.5 C515,635 511,605 516.2,584.5 Z" fill="#88a2c4"/>
<path d="M387.7,411.3 C384,424 383,440 386.6,457.2 C390,474 396,488 405.4,510.3 C418,533 436,563 450.5,586.9 C466,609 480,626 497.4,638.6 C506,645 515,650 524,651.5" stroke="#202020" stroke-width="1.05" fill="none" stroke-linejoin="round" stroke-linecap="round"/>
<path d="M458.8,369.3 L387.7,411.3 C395,427 418,455 448.5,463.9 L518,423.5 C503,402 474,376 458.8,369.3 Z" stroke="#202020" stroke-width="1.05" fill="none" stroke-linejoin="round" stroke-linecap="round"/>
<path d="M518,423.5 C538,442 575,497 586.7,544.6 C595,565 599,590 596.1,609.2 L524,651.5 C515,635 511,605 516.2,584.5 C500,566 470,525 448.5,463.9 M516.2,584.5 L586.7,544.6" stroke="#202020" stroke-width="1.05" fill="none" stroke-linejoin="round" stroke-linecap="round"/>
<path d="M410.9,442.9 L411,461.7" stroke="#202020" stroke-width="1.05" fill="none" stroke-linejoin="round" stroke-linecap="round"/>
<path d="M398,405.2 L450,374.5" stroke="#ff3030" stroke-width="1" fill="none"/>
<path d="M398.5,428.3 C402,433.5 406,438.5 410.9,442.9" stroke="#ff3030" stroke-width="1" fill="none"/>
<g fill="#ffe0e0" opacity="0.55">
<rect x="397.6" y="373.7" width="18.8" height="18.8"/>
<rect x="423" y="373.7" width="18.8" height="18.8"/>
<rect x="448.5" y="373.7" width="18.8" height="18.8"/>
<rect x="397.6" y="399.3" width="18.8" height="18.8"/>
<rect x="423" y="399.3" width="18.8" height="18.8"/>
<rect x="448.5" y="399.3" width="18.8" height="18.8"/>
<rect x="397.6" y="424.1" width="18.8" height="18.8"/>
<rect x="423" y="424.1" width="18.8" height="18.8"/>
</g>
<rect x="480" y="380" width="420" height="70" fill="#fff" fill-opacity=".86" mask="url(#wm)"/>
</svg>
</div>
</body></html>
